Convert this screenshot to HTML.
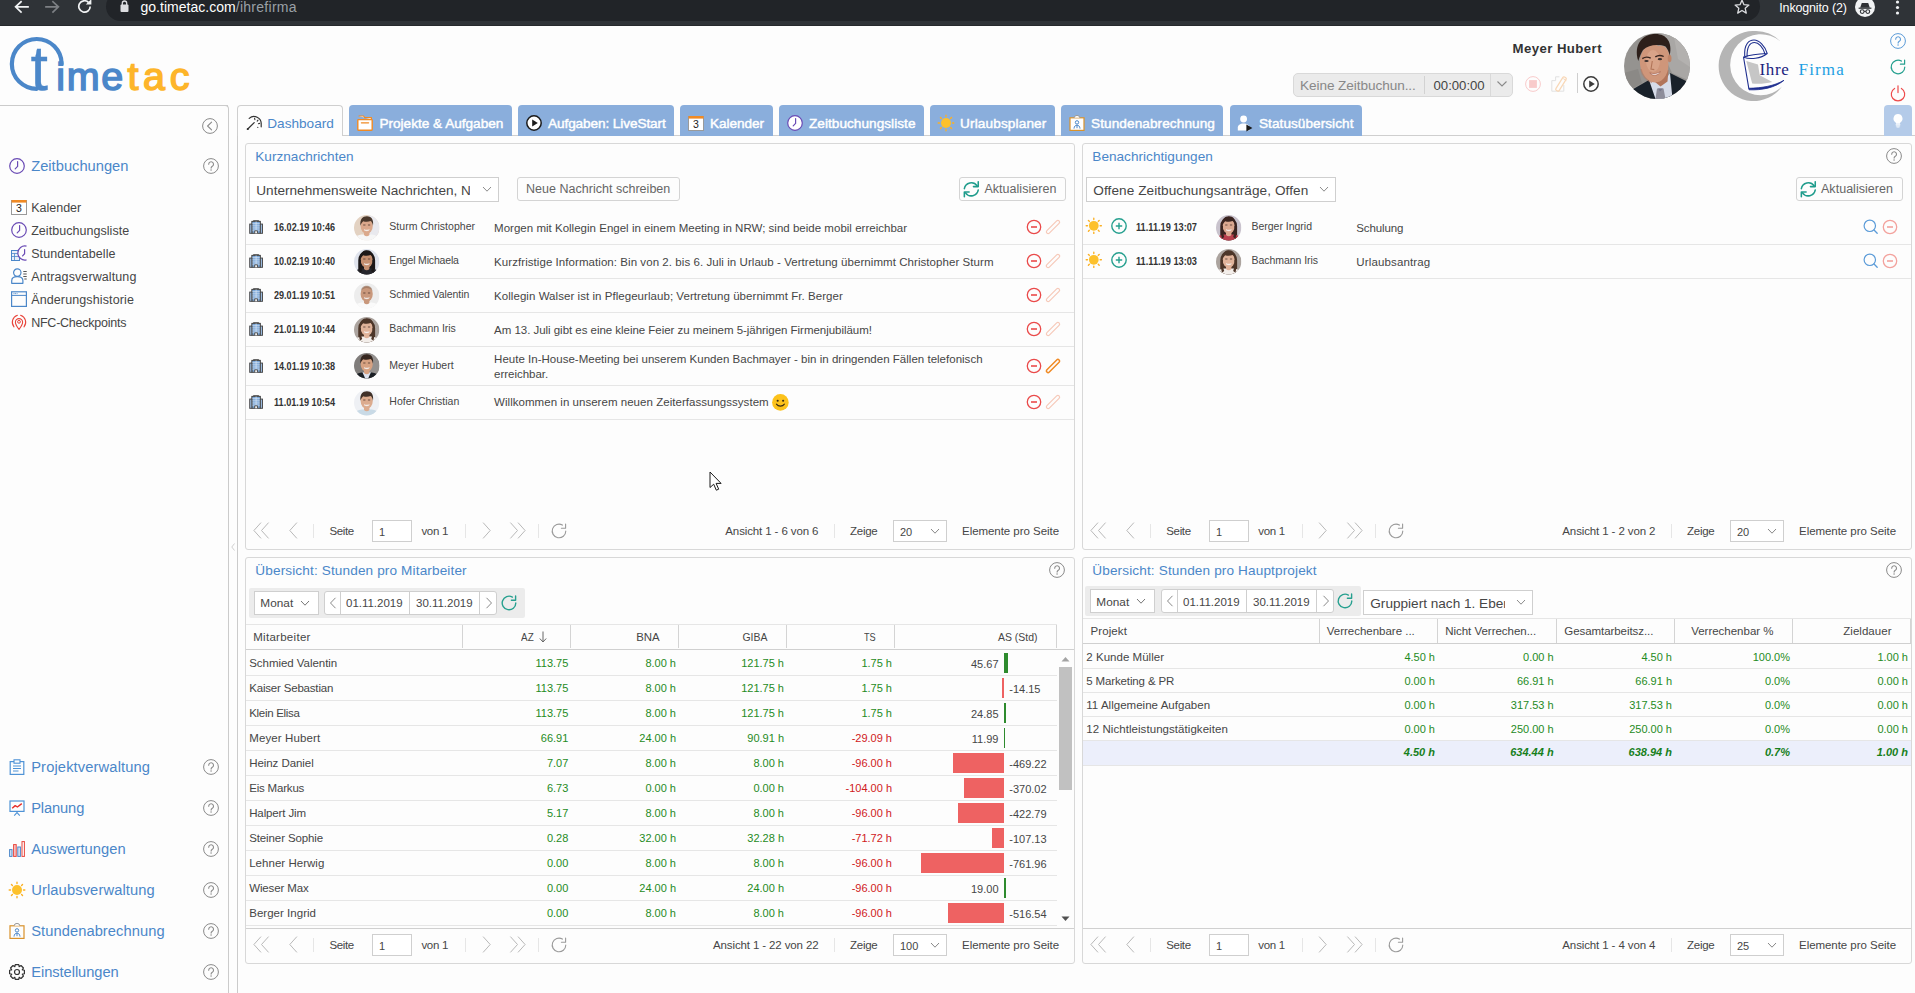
<!DOCTYPE html>
<html lang="de"><head><meta charset="utf-8"><title>TimeTac</title>
<style>
html,body{margin:0;padding:0}
body{width:1915px;height:993px;overflow:hidden;position:relative;background:#fdfdfd;font-family:'Liberation Sans',sans-serif;color:#464646}
.a{position:absolute;box-sizing:border-box;display:block}
.t{position:absolute;white-space:nowrap}
svg{overflow:visible}
</style></head><body>
<div class="a" style="left:0px;top:0px;width:1915px;height:26px;background:#2f3337;"></div>
<div class="a" style="left:0px;top:25px;width:1915px;height:1px;background:#26292c;"></div>
<div class="a" style="left:106px;top:-8px;width:1654px;height:29px;background:#212428;border-radius:14.5px;"></div>
<svg class="a" style="left:13px;top:0px;" width="16" height="16" viewBox="0 0 16 16"><path d="M15 6.800H3.400M8 1.800L2.600 6.800 8 12" fill="none" stroke="#f1f3f4" stroke-width="1.700" stroke-linecap="square" stroke-linejoin="miter"/></svg>
<svg class="a" style="left:45px;top:0px;" width="16" height="16" viewBox="0 0 16 16"><path d="M1 6.800H12.600M8 1.800L13.400 6.800 8 12" fill="none" stroke="#7d8084" stroke-width="1.700" stroke-linecap="square" stroke-linejoin="miter"/></svg>
<svg class="a" style="left:77px;top:-1px;" width="16" height="16" viewBox="0 0 16 16"><path d="M13.200 7.500A5.700 5.700 0 1 1 11.400 3.300" fill="none" stroke="#f1f3f4" stroke-width="1.700"/><path d="M14.400 0v5.600H8.800z" fill="#f1f3f4"/></svg>
<svg class="a" style="left:120px;top:0px;" width="10" height="13" viewBox="0 0 10 13"><rect x=".5" y="4.500" width="8" height="7.500" rx="1" fill="#dcdde0"/><path d="M2.300 5V3.200a2.200 2.200 0 0 1 4.400 0V5" fill="none" stroke="#dcdde0" stroke-width="1.300"/></svg>
<div class="t" style="top:-2.00px;font-size:14px;line-height:18px;color:#ffffff;left:140.50px;letter-spacing:0.026px;">go.timetac.com</div>
<div class="t" style="top:-2.00px;font-size:14px;line-height:18px;color:#9aa0a6;left:235.80px;letter-spacing:0.264px;">/ihrefirma</div>
<svg class="a" style="left:1734px;top:-1px;" width="16" height="16" viewBox="0 0 16 16"><path d="M8 1.200l2 4.500 4.900.4-3.700 3.200 1.100 4.800L8 11.500l-4.300 2.600 1.100-4.800L1.100 6.100l4.900-.4z" fill="none" stroke="#dcdde0" stroke-width="1.300" stroke-linejoin="round"/></svg>
<div class="t" style="top:0.00px;font-size:12.5px;line-height:16px;color:#ffffff;left:1779.30px;letter-spacing:-0.160px;">Inkognito (2)</div>
<svg class="a" style="left:1855px;top:-3px;" width="20" height="20" viewBox="0 0 20 20"><circle cx="10" cy="10" r="10" fill="#f1f3f4"/><path d="M5.200 10.800h9.600l-1.600-4.800h-6.400z" fill="#2f3236"/><path d="M3.600 11.200h12.800" stroke="#2f3236" stroke-width="1.200"/><circle cx="7.200" cy="14.600" r="1.900" fill="none" stroke="#2f3236" stroke-width="1.100"/><circle cx="12.800" cy="14.600" r="1.900" fill="none" stroke="#2f3236" stroke-width="1.100"/><path d="M9.100 14.400h1.800" stroke="#2f3236" stroke-width="1"/></svg>
<svg class="a" style="left:1895px;top:0px;" width="5" height="16" viewBox="0 0 5 16"><circle cx="2.500" cy="2" r="1.600" fill="#f1f3f4"/><circle cx="2.500" cy="7.500" r="1.600" fill="#f1f3f4"/><circle cx="2.500" cy="13" r="1.600" fill="#f1f3f4"/></svg>
<svg class="a" style="left:8px;top:34px;" width="190" height="62" viewBox="0 0 190 62"><path d="M28.750 54.800A24.900 24.900 0 1 1 53.650 29.900" fill="none" stroke="#4b87c9" stroke-width="4.200" stroke-linecap="round"/></svg>
<div class="t" style="top:27.00px;font-size:63px;line-height:82px;color:#4b87c9;left:30.50px;-webkit-text-stroke:.3px currentColor;">t</div>
<div class="t" style="top:50.50px;font-size:39.5px;line-height:51px;color:#4b87c9;left:56.30px;letter-spacing:1.615px;-webkit-text-stroke:1.500px currentColor;">ime</div>
<div class="t" style="top:50.50px;font-size:39.5px;line-height:51px;color:#fdb52a;left:127.50px;letter-spacing:4.599px;-webkit-text-stroke:1.500px currentColor;">tac</div>
<div class="t" style="top:40.00px;font-size:13.2px;line-height:17px;color:#333333;left:1512.50px;font-weight:700;letter-spacing:0.435px;">Meyer Hubert</div>
<div class="a" style="left:1293px;top:73px;width:220px;height:24px;background:#ebebeb;border:1px solid #d9d9d9;border-radius:5px;"></div>
<div class="a" style="left:1424px;top:76px;width:1px;height:18px;background:#d2d2d2;"></div>
<div class="a" style="left:1490px;top:74px;width:1px;height:22px;background:#d9d9d9;"></div>
<div class="t" style="top:76.50px;font-size:13.6px;line-height:18px;color:#888888;left:1300.00px;letter-spacing:-0.071px;">Keine Zeitbuchun...</div>
<div class="t" style="top:77.00px;font-size:13.2px;line-height:17px;color:#444444;left:1433.50px;letter-spacing:-0.018px;">00:00:00</div>
<svg class="a" style="left:1496px;top:80px;" width="12" height="8" viewBox="0 0 12 8"><path d="M1.500 1.500L6 6l4.500-4.500" fill="none" stroke="#8a8a8a" stroke-width="1.100"/></svg>
<svg class="a" style="left:1525px;top:75.5px;" width="16" height="16" viewBox="0 0 16 16"><g opacity=".28"><circle cx="8" cy="8" r="7.400" fill="none" stroke="#ee4b4b" stroke-width="1"/><rect x="4.100" y="4.100" width="7.800" height="7.800" fill="#ee4b4b"/></g></svg>
<svg class="a" style="left:1551px;top:75.5px;" width="16" height="16" viewBox="0 0 16 16"><g opacity=".32"><path d="M8.400 .8H4.600v3.800H.8v10.600h12V9" fill="none" stroke="#a8a8a8" stroke-width="1"/><rect x="-7.800" y="-1.900" width="15.600" height="3.800" rx="1.200" transform="translate(10 8) rotate(-58)" fill="none" stroke="#f08a24" stroke-width="1.200"/><path d="M12.300 2.600l3 1.900" stroke="#f08a24" stroke-width="1"/></g></svg>
<div class="a" style="left:1577px;top:73px;width:1px;height:20px;background:#cfcfcf;"></div>
<svg class="a" style="left:1582.5px;top:76px;" width="16" height="16" viewBox="0 0 16 16"><circle cx="8" cy="8" r="7.200" fill="#fdfdfd" stroke="#3a3a3a" stroke-width="1.500"/><path d="M6.200 4.400L11.800 8l-5.600 3.600z" fill="#3a3a3a"/></svg>
<svg class="a" style="left:1624px;top:33px;" width="66" height="66" viewBox="0 0 66 66"><clipPath id="fa"><circle cx="33" cy="33" r="33"/></clipPath><g clip-path="url(#fa)"><rect width="66" height="66" fill="#959390"/><path d="M30 0h36v48L48 40z" fill="#a9a7a5"/><path d="M50 4l16 8v22l-12-8z" fill="#b3b1af"/><path d="M0 40l14-4 4 14-18 10z" fill="#8b8986"/><path d="M4 59L25 47l8 14 13-21 18 9 2 17H0z" fill="#19212a"/><path d="M25 47l6.500 19H48.500L46 40l-8 11z" fill="#d6dbe8"/><path d="M33 55.500h6.500l2 10.500h-10z" fill="#8e8e9b"/><path d="M34 55.500l2 3 3-3z" fill="#76768a"/><path d="M27 40l17.500-3-1 11.500-7 5-8.500-7z" fill="#b1745a"/><ellipse cx="30.200" cy="30.500" rx="14.200" ry="19" transform="rotate(-7 30.200 30.500)" fill="#cf967a"/><ellipse cx="36.500" cy="22.500" rx="8.500" ry="10" fill="#cf967a"/><ellipse cx="29" cy="28" rx="7" ry="11" fill="#dba88e" opacity=".7"/><ellipse cx="45.600" cy="25.500" rx="1.900" ry="3.800" fill="#bf8468"/><path d="M14.300 28C9 11 19 1 31.500 1c11.500 0 17 8.500 14.300 21.500-1-4-2.500-7-4.300-9-7-2.500-17-2-22.500 3.500-2 3-3.500 7-4.700 11z" fill="#2d1f1a"/><path d="M18.300 25.600c2.500-1.700 5.800-1.800 8.400-.4M31.300 23.900c2.600-1.700 5.800-1.800 8.400-.4" stroke="#3a2620" stroke-width="1.400" fill="none"/><ellipse cx="22.500" cy="28" rx="2.200" ry="1.100" fill="#39302f"/><ellipse cx="35.900" cy="26.200" rx="2.200" ry="1.100" fill="#39302f"/><path d="M28.300 28l-1.300 8 3.300.6" stroke="#b17458" fill="none" stroke-width="1.100"/><path d="M25.800 39.800c3.300 1.500 7.700 1 10.600-1.300-1.600 4.200-8 5.300-10.600 1.300z" fill="#f3eded" stroke="#a55f4e" stroke-width=".6"/><path d="M17 36c1 6 5 11 11 13.500" stroke="#b67c62" stroke-width="1.500" fill="none" opacity=".6"/></g></svg>
<svg class="a" style="left:1716px;top:29px;" width="72" height="74" viewBox="0 0 72 74"><path d="M37 2A35 35 0 1 0 66 57.500A30.500 30.500 0 1 1 64.500 12.500A34.500 34.500 0 0 0 37 2z" fill="#b5b5b5"/><path d="M30.300 32l11.700 3.400 1.700 10.900 12.600 6.700c-6 1.600-13 2.200-20.100 1.600z" fill="#c6c6c6"/><path d="M28.700 27C28 15 33 11 38 11c5 0 11 6 13.200 13.500M31 27.500C31 17 34.500 13.500 38.500 13.500c4 0 8.500 4.500 10.500 11.500M27.500 28c6.500 3 17.500 1.500 23.700-3.500M27.500 28c7-2.400 16.500-3.200 23.700-3.500M27.500 28l5.300 31.300" fill="none" stroke="#1f2f8f" stroke-width="1.100" stroke-linecap="round"/><path d="M32.800 59.300c13.200-.3 25.200-2.300 35.200-8-9 7.500-22 10-35 9.500z" fill="#1f2f8f" stroke="#1f2f8f" stroke-width=".8" stroke-linejoin="round"/></svg>
<div class="t" style="top:58.50px;font-size:17px;line-height:22px;color:#1a237e;left:1759.50px;font-family:'Liberation Serif', serif;letter-spacing:0.656px;">Ihre</div>
<div class="t" style="top:58.50px;font-size:17px;line-height:22px;color:#1b9fe3;left:1798.50px;font-family:'Liberation Serif', serif;letter-spacing:1.178px;">Firma</div>
<svg class="a" style="left:1890px;top:33px;" width="16" height="16" viewBox="0 0 16 16"><circle cx="8" cy="8" r="7.4" fill="none" stroke="#5b9bd8" stroke-width="1"/><path d="M5.7 6.2a2.4 2.4 0 1 1 3.6 2.1c-.8.5-1.2.9-1.2 1.8" fill="none" stroke="#5b9bd8" stroke-width="1.1" stroke-linecap="round"/><circle cx="8.05" cy="12" r=".75" fill="#5b9bd8"/></svg>
<svg class="a" style="left:1889.5px;top:59px;" width="16" height="16" viewBox="0 0 16 16"><path d="M14.800 8A6.800 6.800 0 1 1 11.400 2.100" fill="none" stroke="#26a08f" stroke-width="1.2" stroke-linecap="round"/><path d="M14.600 1v4.200h-4.200" fill="none" stroke="#26a08f" stroke-width="1.2" stroke-linecap="round" stroke-linejoin="round"/></svg>
<svg class="a" style="left:1890px;top:84.8px;" width="16" height="16" viewBox="0 0 16 16"><path d="M4.600 3.400A6.700 6.700 0 1 0 11.400 3.400" fill="none" stroke="#ee4b4b" stroke-width="1.200" stroke-linecap="round"/><path d="M8 .8v6.800" stroke="#ee4b4b" stroke-width="1.200" stroke-linecap="round"/></svg>
<div class="a" style="left:0px;top:105px;width:228px;height:1px;background:#cbcbcb;"></div>
<div class="a" style="left:224px;top:105px;width:5px;height:5px;border:1px solid #cbcbcb;border-radius:0 4px 0 0;border-left:none;border-bottom:none;"></div>
<div class="a" style="left:228px;top:109px;width:1px;height:884px;background:#cbcbcb;"></div>
<svg class="a" style="left:201.5px;top:117.5px;" width="16" height="16" viewBox="0 0 16 16"><circle cx="8" cy="8" r="7.400" fill="none" stroke="#8a8a8a" stroke-width="1"/><path d="M9.600 4.200L5.600 8l4 3.800" fill="none" stroke="#8a8a8a" stroke-width="1.1" stroke-linecap="round" stroke-linejoin="round"/></svg>
<svg class="a" style="left:231px;top:543px;" width="4" height="8" viewBox="0 0 4 8"><path d="M3.500 .5L.8 4l2.700 3.500" fill="none" stroke="#d0d0d0" stroke-width="1"/></svg>
<svg class="a" style="left:9px;top:157.8px;" width="16" height="16" viewBox="0 0 16 16"><circle cx="8" cy="8" r="7.3" fill="none" stroke="#6a4bb5" stroke-width="1.2"/><path d="M8.6 3.6v4.8L6.2 10.8" fill="none" stroke="#6a4bb5" stroke-width="1.2" stroke-linecap="round" stroke-linejoin="round"/></svg>
<div class="t" style="top:156.50px;font-size:14.7px;line-height:19px;color:#4b87c9;left:31.20px;letter-spacing:0.009px;">Zeitbuchungen</div>
<svg class="a" style="left:202.8px;top:157.8px;" width="16" height="16" viewBox="0 0 16 16"><circle cx="8" cy="8" r="7.4" fill="none" stroke="#8a8a8a" stroke-width="1"/><path d="M5.7 6.2a2.4 2.4 0 1 1 3.6 2.1c-.8.5-1.2.9-1.2 1.8" fill="none" stroke="#8a8a8a" stroke-width="1.1" stroke-linecap="round"/><circle cx="8.05" cy="12" r=".75" fill="#8a8a8a"/></svg>
<svg class="a" style="left:10.8px;top:199.3px;" width="16" height="16" viewBox="0 0 16 16"><rect x=".5" y="1.5" width="15" height="14" fill="#fff" stroke="#9a9a9a" stroke-width="1"/><rect x=".5" y="1" width="15" height="2.6" fill="#f08a24"/><text x="8" y="13.4" font-size="10.5" text-anchor="middle" fill="#222" font-family="Liberation Sans, sans-serif">3</text></svg>
<div class="t" style="top:200.00px;font-size:12.5px;line-height:16px;color:#464646;left:31.20px;letter-spacing:-0.006px;">Kalender</div>
<svg class="a" style="left:10.8px;top:222.3px;" width="16" height="16" viewBox="0 0 16 16"><circle cx="8" cy="8" r="7.3" fill="none" stroke="#6a4bb5" stroke-width="1.2"/><path d="M8.6 3.6v4.8L6.2 10.8" fill="none" stroke="#6a4bb5" stroke-width="1.2" stroke-linecap="round" stroke-linejoin="round"/></svg>
<div class="t" style="top:223.00px;font-size:12.5px;line-height:16px;color:#464646;left:31.20px;letter-spacing:0.042px;">Zeitbuchungsliste</div>
<svg class="a" style="left:10.8px;top:245.3px;" width="16" height="16" viewBox="0 0 16 16"><rect x=".5" y="5.5" width="8" height="10" fill="#e8eef8" stroke="#4b87c9" stroke-width="1"/><path d="M.5 8.5h8M.5 11.5h8M3.5 8.5v7" stroke="#4b87c9" stroke-width=".8" fill="none"/><path d="M15.5 1.2a7 7 0 1 0 0 13.6" fill="#fdfdfd" stroke="#6a4bb5" stroke-width="1.2"/><path d="M13.6 4.5v4.2l-2 2.2" fill="none" stroke="#6a4bb5" stroke-width="1.2" stroke-linecap="round"/></svg>
<div class="t" style="top:246.00px;font-size:12.5px;line-height:16px;color:#464646;left:31.20px;letter-spacing:0.071px;">Stundentabelle</div>
<svg class="a" style="left:10.8px;top:268.3px;" width="16" height="16" viewBox="0 0 16 16"><circle cx="6.3" cy="4.6" r="3.7" fill="none" stroke="#4b87c9" stroke-width="1.2"/><path d="M.7 15.3v-2.6c0-2.4 2-4 5.6-4s5.6 1.6 5.6 4v2.6z" fill="none" stroke="#4b87c9" stroke-width="1.2" stroke-linejoin="round"/><path d="M12.3 3.5h3.4M12.3 6h3.4M12.3 8.5h3.4M13.3 11h2.4" stroke="#555" stroke-width="1.1"/></svg>
<div class="t" style="top:269.00px;font-size:12.5px;line-height:16px;color:#464646;left:31.20px;letter-spacing:0.104px;">Antragsverwaltung</div>
<svg class="a" style="left:10.8px;top:291.3px;" width="16" height="16" viewBox="0 0 16 16"><rect x=".6" y=".8" width="14.800" height="14.600" fill="none" stroke="#4b87c9" stroke-width="1.200"/><path d="M.6 4.400h14.800" stroke="#4b87c9" stroke-width="1"/><path d="M2.500 2.600h4" stroke="#4b87c9" stroke-width=".9" stroke-dasharray="1 .6"/></svg>
<div class="t" style="top:292.00px;font-size:12.5px;line-height:16px;color:#464646;left:31.20px;letter-spacing:0.120px;">Änderungshistorie</div>
<svg class="a" style="left:10.8px;top:314.3px;" width="16" height="16" viewBox="0 0 16 16"><path d="M8 15.400C5.600 12.200 4.400 10 4.400 8.200a3.600 3.600 0 0 1 7.200 0c0 1.800-1.200 4-3.600 7.200z" fill="none" stroke="#e8453c" stroke-width="1.100" stroke-linejoin="round"/><circle cx="8" cy="7.800" r="1.400" fill="none" stroke="#e8453c" stroke-width="1"/><path d="M6.400 1.300A7.200 7.200 0 0 0 3 12.800M9.600 1.300A7.200 7.200 0 0 1 13 12.800" fill="none" stroke="#e8453c" stroke-width="1.100" stroke-linecap="round"/></svg>
<div class="t" style="top:315.00px;font-size:12.5px;line-height:16px;color:#464646;left:31.20px;letter-spacing:-0.243px;">NFC-Checkpoints</div>
<svg class="a" style="left:9px;top:759px;" width="16" height="16" viewBox="0 0 16 16"><rect x="1.2" y="2.6" width="13.6" height="12.8" fill="none" stroke="#4f93d6" stroke-width="1.2"/><rect x="5" y=".8" width="6" height="3.4" fill="#fdfdfd" stroke="#4f93d6" stroke-width="1.1"/><path d="M4 7h8M4 9.500h8M4 12h5.500" stroke="#4f93d6" stroke-width="1"/></svg>
<div class="t" style="top:757.50px;font-size:14.7px;line-height:19px;color:#4b87c9;left:31.20px;letter-spacing:0.132px;">Projektverwaltung</div>
<svg class="a" style="left:203px;top:759px;" width="16" height="16" viewBox="0 0 16 16"><circle cx="8" cy="8" r="7.4" fill="none" stroke="#8a8a8a" stroke-width="1"/><path d="M5.7 6.2a2.4 2.4 0 1 1 3.6 2.1c-.8.5-1.2.9-1.2 1.8" fill="none" stroke="#8a8a8a" stroke-width="1.1" stroke-linecap="round"/><circle cx="8.05" cy="12" r=".75" fill="#8a8a8a"/></svg>
<svg class="a" style="left:9px;top:800px;" width="16" height="16" viewBox="0 0 16 16"><rect x="1" y="1" width="14" height="10.400" fill="none" stroke="#4f93d6" stroke-width="1.2"/><path d="M8 11.400v1.600M5.200 15.600L8 12.600l2.800 3" fill="none" stroke="#4f93d6" stroke-width="1.1"/><path d="M3.200 8.200l3-2.600 2.200 1.400L12.800 3.600" fill="none" stroke="#e8302a" stroke-width="1.4" stroke-linejoin="round"/></svg>
<div class="t" style="top:798.50px;font-size:14.7px;line-height:19px;color:#4b87c9;left:31.20px;letter-spacing:-0.129px;">Planung</div>
<svg class="a" style="left:203px;top:800px;" width="16" height="16" viewBox="0 0 16 16"><circle cx="8" cy="8" r="7.4" fill="none" stroke="#8a8a8a" stroke-width="1"/><path d="M5.7 6.2a2.4 2.4 0 1 1 3.6 2.1c-.8.5-1.2.9-1.2 1.8" fill="none" stroke="#8a8a8a" stroke-width="1.1" stroke-linecap="round"/><circle cx="8.05" cy="12" r=".75" fill="#8a8a8a"/></svg>
<svg class="a" style="left:9px;top:841px;" width="16" height="16" viewBox="0 0 16 16"><rect x=".6" y="8.600" width="2.400" height="6.800" fill="#dbe7f6" stroke="#4b87c9" stroke-width="1"/><rect x="4.600" y="3.600" width="2.600" height="11.800" fill="#f7caca" stroke="#e8453c" stroke-width="1"/><rect x="8.800" y="6" width="2.600" height="9.400" fill="#dbe7f6" stroke="#4b87c9" stroke-width="1"/><rect x="13" y=".6" width="2.400" height="14.800" fill="#fdfdfd" stroke="#e8453c" stroke-width="1"/></svg>
<div class="t" style="top:839.50px;font-size:14.7px;line-height:19px;color:#4b87c9;left:31.20px;letter-spacing:0.049px;">Auswertungen</div>
<svg class="a" style="left:203px;top:841px;" width="16" height="16" viewBox="0 0 16 16"><circle cx="8" cy="8" r="7.4" fill="none" stroke="#8a8a8a" stroke-width="1"/><path d="M5.7 6.2a2.4 2.4 0 1 1 3.6 2.1c-.8.5-1.2.9-1.2 1.8" fill="none" stroke="#8a8a8a" stroke-width="1.1" stroke-linecap="round"/><circle cx="8.05" cy="12" r=".75" fill="#8a8a8a"/></svg>
<svg class="a" style="left:9px;top:882px;" width="16" height="16" viewBox="0 0 16 16"><circle cx="8" cy="8" r="5" fill="#fdc12c"/><path d="M14.50 8.00L15.80 8.00M12.60 12.60L13.52 13.52M8.00 14.50L8.00 15.80M3.40 12.60L2.48 13.52M1.50 8.00L0.20 8.00M3.40 3.40L2.48 2.48M8.00 1.50L8.00 0.20M12.60 3.40L13.52 2.48" stroke="#fbb024" stroke-width="1.400" stroke-linecap="round"/></svg>
<div class="t" style="top:880.50px;font-size:14.7px;line-height:19px;color:#4b87c9;left:31.20px;letter-spacing:0.121px;">Urlaubsverwaltung</div>
<svg class="a" style="left:203px;top:882px;" width="16" height="16" viewBox="0 0 16 16"><circle cx="8" cy="8" r="7.4" fill="none" stroke="#8a8a8a" stroke-width="1"/><path d="M5.7 6.2a2.4 2.4 0 1 1 3.6 2.1c-.8.5-1.2.9-1.2 1.8" fill="none" stroke="#8a8a8a" stroke-width="1.1" stroke-linecap="round"/><circle cx="8.05" cy="12" r=".75" fill="#8a8a8a"/></svg>
<svg class="a" style="left:9px;top:923px;" width="16" height="16" viewBox="0 0 16 16"><rect x="1" y="2.800" width="14" height="12.600" fill="none" stroke="#d9922b" stroke-width="1.2"/><path d="M5.200 2.800a2.800 2.400 0 0 1 5.600 0" fill="#fdfdfd" stroke="#9a9a9a" stroke-width="1"/><circle cx="8" cy="7.400" r="1.700" fill="none" stroke="#4b87c9" stroke-width="1"/><path d="M5 13.600c.2-2.200 1.200-3.400 3-3.400s2.800 1.200 3 3.400M8 10.200v3" fill="none" stroke="#4b87c9" stroke-width="1"/></svg>
<div class="t" style="top:921.50px;font-size:14.7px;line-height:19px;color:#4b87c9;left:31.20px;letter-spacing:0.070px;">Stundenabrechnung</div>
<svg class="a" style="left:203px;top:923px;" width="16" height="16" viewBox="0 0 16 16"><circle cx="8" cy="8" r="7.4" fill="none" stroke="#8a8a8a" stroke-width="1"/><path d="M5.7 6.2a2.4 2.4 0 1 1 3.6 2.1c-.8.5-1.2.9-1.2 1.8" fill="none" stroke="#8a8a8a" stroke-width="1.1" stroke-linecap="round"/><circle cx="8.05" cy="12" r=".75" fill="#8a8a8a"/></svg>
<svg class="a" style="left:9px;top:964px;" width="16" height="16" viewBox="0 0 16 16"><path d="M15.40 6.27L15.40 9.73L13.25 10.22L13.28 10.14L14.46 12.01L12.01 14.46L10.14 13.28L10.22 13.25L9.73 15.40L6.27 15.40L5.78 13.25L5.86 13.28L3.99 14.46L1.54 12.01L2.72 10.14L2.75 10.22L0.60 9.73L0.60 6.27L2.75 5.78L2.72 5.86L1.54 3.99L3.99 1.54L5.86 2.72L5.78 2.75L6.27 0.60L9.73 0.60L10.22 2.75L10.14 2.72L12.01 1.54L14.46 3.99L13.28 5.86L13.25 5.78z" fill="none" stroke="#333" stroke-width="1.2" stroke-linejoin="round"/><circle cx="8" cy="8" r="2.500" fill="none" stroke="#333" stroke-width="1.2"/></svg>
<div class="t" style="top:962.50px;font-size:14.7px;line-height:19px;color:#4b87c9;left:31.20px;letter-spacing:-0.054px;">Einstellungen</div>
<svg class="a" style="left:203px;top:964px;" width="16" height="16" viewBox="0 0 16 16"><circle cx="8" cy="8" r="7.4" fill="none" stroke="#8a8a8a" stroke-width="1"/><path d="M5.7 6.2a2.4 2.4 0 1 1 3.6 2.1c-.8.5-1.2.9-1.2 1.8" fill="none" stroke="#8a8a8a" stroke-width="1.1" stroke-linecap="round"/><circle cx="8.05" cy="12" r=".75" fill="#8a8a8a"/></svg>
<div class="a" style="left:237px;top:135px;width:1678px;height:1px;background:#cfcfcf;"></div>
<div class="a" style="left:237px;top:135px;width:1px;height:858px;background:#cbcbcb;"></div>
<div class="a" style="left:237px;top:105px;width:106px;height:31px;background:#fdfdfd;border:1px solid #cfcfcf;border-radius:4px 4px 0 0;border-bottom:none;"></div>
<svg class="a" style="left:245.5px;top:115px;" width="16" height="16" viewBox="0 0 16 16"><path d="M3.200 3.400A7.200 7.200 0 0 1 15.200 9.200v2.600" fill="none" stroke="#333" stroke-width="1.2" stroke-linecap="round"/><path d="M1.500 14.200L8.200 7.600" stroke="#333" stroke-width="1.3" stroke-linecap="round"/><circle cx="1.800" cy="14" r="1.100" fill="#333"/><path d="M8.600 3.400l.3 1.200M12 5.200l-.8.9M13.600 8.400l-1.200.3M11.800 12.400h.01" stroke="#333" stroke-width="1.100" stroke-linecap="round"/></svg>
<div class="t" style="top:114.50px;font-size:13.6px;line-height:18px;color:#4b87c9;left:267.30px;letter-spacing:-0.002px;">Dashboard</div>
<div class="a" style="left:349.3px;top:105px;width:162.5px;height:31px;background:#8aaedc;border-radius:4px 4px 0 0;"></div>
<svg class="a" style="left:356.8px;top:115px;" width="16" height="16" viewBox="0 0 16 16"><path d="M1.600 1h5l1 1.600H14.400v2" fill="#fff" stroke="#f08a24" stroke-width="1.200" stroke-linejoin="round"/><rect x=".8" y="4.600" width="14.400" height="10.600" rx=".6" fill="#fff" stroke="#f08a24" stroke-width="1.400"/><path d="M4.400 7.800h7.200" stroke="#f08a24" stroke-width="1.300" stroke-linecap="round"/></svg>
<div class="t" style="top:114.50px;font-size:13.6px;line-height:18px;color:#ffffff;left:379.40px;letter-spacing:0.002px;-webkit-text-stroke:.45px #fff;">Projekte &amp; Aufgaben</div>
<div class="a" style="left:518px;top:105px;width:155.79999999999995px;height:31px;background:#8aaedc;border-radius:4px 4px 0 0;"></div>
<svg class="a" style="left:525.5px;top:115px;" width="16" height="16" viewBox="0 0 16 16"><circle cx="8" cy="8" r="7.200" fill="#fff" stroke="#1a1a1a" stroke-width="1.500"/><path d="M6.200 4.400L11.800 8l-5.600 3.600z" fill="#1a1a1a"/></svg>
<div class="t" style="top:114.50px;font-size:13.6px;line-height:18px;color:#ffffff;left:548.00px;letter-spacing:-0.090px;-webkit-text-stroke:.45px #fff;">Aufgaben: LiveStart</div>
<div class="a" style="left:680px;top:105px;width:92.79999999999995px;height:31px;background:#8aaedc;border-radius:4px 4px 0 0;"></div>
<svg class="a" style="left:687.5px;top:115px;" width="16" height="16" viewBox="0 0 16 16"><rect x=".5" y="1.5" width="15" height="14" fill="#fff" stroke="#9a9a9a" stroke-width="1"/><rect x=".5" y="1" width="15" height="2.6" fill="#f08a24"/><text x="8" y="13.4" font-size="10.5" text-anchor="middle" fill="#222" font-family="Liberation Sans, sans-serif">3</text></svg>
<div class="t" style="top:114.50px;font-size:13.6px;line-height:18px;color:#ffffff;left:710.00px;letter-spacing:-0.053px;-webkit-text-stroke:.45px #fff;">Kalender</div>
<div class="a" style="left:779.2px;top:105px;width:144.79999999999995px;height:31px;background:#8aaedc;border-radius:4px 4px 0 0;"></div>
<svg class="a" style="left:786.7px;top:115px;" width="16" height="16" viewBox="0 0 16 16"><circle cx="8" cy="8" r="7.3" fill="#fff" stroke="#6a4bb5" stroke-width="1.2"/><path d="M8.6 3.6v4.8L6.2 10.8" fill="none" stroke="#6a4bb5" stroke-width="1.2" stroke-linecap="round" stroke-linejoin="round"/></svg>
<div class="t" style="top:114.50px;font-size:13.6px;line-height:18px;color:#ffffff;left:809.00px;letter-spacing:0.041px;-webkit-text-stroke:.45px #fff;">Zeitbuchungsliste</div>
<div class="a" style="left:930.3px;top:105px;width:124.70000000000005px;height:31px;background:#8aaedc;border-radius:4px 4px 0 0;"></div>
<svg class="a" style="left:937.8px;top:115px;" width="16" height="16" viewBox="0 0 16 16"><circle cx="8" cy="8" r="5" fill="#fdc12c"/><path d="M14.50 8.00L15.80 8.00M12.60 12.60L13.52 13.52M8.00 14.50L8.00 15.80M3.40 12.60L2.48 13.52M1.50 8.00L0.20 8.00M3.40 3.40L2.48 2.48M8.00 1.50L8.00 0.20M12.60 3.40L13.52 2.48" stroke="#fbb024" stroke-width="1.400" stroke-linecap="round"/></svg>
<div class="t" style="top:114.50px;font-size:13.6px;line-height:18px;color:#ffffff;left:960.00px;letter-spacing:0.143px;-webkit-text-stroke:.45px #fff;">Urlaubsplaner</div>
<div class="a" style="left:1061.4px;top:105px;width:161.89999999999986px;height:31px;background:#8aaedc;border-radius:4px 4px 0 0;"></div>
<svg class="a" style="left:1068.9px;top:115px;" width="16" height="16" viewBox="0 0 16 16"><rect x="1" y="2.800" width="14" height="12.600" fill="#fff" stroke="#d9922b" stroke-width="1.2"/><path d="M5.200 2.800a2.800 2.400 0 0 1 5.600 0" fill="#fdfdfd" stroke="#9a9a9a" stroke-width="1"/><circle cx="8" cy="7.400" r="1.700" fill="none" stroke="#4b87c9" stroke-width="1"/><path d="M5 13.600c.2-2.200 1.200-3.400 3-3.400s2.800 1.200 3 3.400M8 10.200v3" fill="none" stroke="#4b87c9" stroke-width="1"/></svg>
<div class="t" style="top:114.50px;font-size:13.6px;line-height:18px;color:#ffffff;left:1091.00px;letter-spacing:0.091px;-webkit-text-stroke:.45px #fff;">Stundenabrechnung</div>
<div class="a" style="left:1229.6px;top:105px;width:132.10000000000014px;height:31px;background:#8aaedc;border-radius:4px 4px 0 0;"></div>
<svg class="a" style="left:1237.1px;top:115px;" width="16" height="16" viewBox="0 0 16 16"><circle cx="6.600" cy="4" r="3.400" fill="#fff"/><path d="M.8 15.600v-3c0-2.600 2.200-4.200 5.800-4.200s5.800 1.600 5.800 4.200v3z" fill="#fff"/><path d="M9.400 9.400L15.400 13l-6 3.400z" fill="#1a1a1a"/></svg>
<div class="t" style="top:114.50px;font-size:13.6px;line-height:18px;color:#ffffff;left:1259.00px;letter-spacing:0.053px;-webkit-text-stroke:.45px #fff;">Statusübersicht</div>
<div class="a" style="left:1884px;top:105px;width:28px;height:31px;background:#b4cbe9;border-radius:4px 4px 0 0;"></div>
<svg class="a" style="left:1890.5px;top:111.5px;" width="14" height="17" viewBox="0 0 16 16.500"><path d="M8 .8a5.200 5.200 0 0 0-3 9.400c.5.400.8 1 .8 1.800h4.400c0-.8.3-1.400.8-1.800A5.200 5.200 0 0 0 8 .8z" fill="#fff"/><path d="M5.800 13h4.400M6 14.400h4M6.800 15.700h2.400" stroke="#fff" stroke-width="1" stroke-linecap="round"/></svg>
<div class="a" style="left:245px;top:143px;width:830px;height:407px;background:#fdfdfd;border:1px solid #d8d8d8;border-radius:3px;"></div>
<div class="t" style="top:147.50px;font-size:13.6px;line-height:18px;color:#4b87c9;left:255.30px;letter-spacing:0.004px;">Kurznachrichten</div>
<div class="a" style="left:249px;top:177px;width:250px;height:25px;background:#fff;border:1px solid #cfcfcf;"></div>
<div class="a" style="left:256px;top:178px;width:214px;height:23px;overflow:hidden">
<div class="t" style="top:3.50px;font-size:13.6px;line-height:18px;color:#464646;left:0.30px;">Unternehmensweite Nachrichten, Nachrichten an mich</div>
</div>
<svg class="a" style="left:481.5px;top:186.2px;" width="10" height="7" viewBox="0 0 10 7"><path d="M1 1l4 4.200L9 1" fill="none" stroke="#8c8c8c" stroke-width="1"/></svg>
<div class="a" style="left:517px;top:177px;width:163px;height:24px;background:#fdfdfd;border:1px solid #d4d4d4;border-radius:3px;"></div>
<div class="t" style="top:181.00px;font-size:12.5px;line-height:16px;color:#666666;left:526.00px;letter-spacing:0.020px;">Neue Nachricht schreiben</div>
<div class="a" style="left:959px;top:177px;width:107px;height:24px;background:#fdfdfd;border:1px solid #d4d4d4;border-radius:3px;"></div>
<svg class="a" style="left:962.7px;top:180.5px;" width="16.6" height="16.6" viewBox="0 0 16 16"><path d="M1.300 7.400A6.800 6.800 0 0 1 13.600 4.600M14.700 8.600A6.800 6.800 0 0 1 2.400 11.400" fill="none" stroke="#1f9c8c" stroke-width="1.500" stroke-linecap="round"/><path d="M14.700 .8v4.600H10.100M1.300 15.200v-4.600h4.600" fill="none" stroke="#1f9c8c" stroke-width="1.500" stroke-linecap="round" stroke-linejoin="round"/></svg>
<div class="t" style="top:181.00px;font-size:12.5px;line-height:16px;color:#666666;left:984.40px;letter-spacing:0.032px;">Aktualisieren</div>
<svg class="a" style="left:249px;top:220.0px;" width="14.2" height="14.2" viewBox="0 0 16 16"><path d="M4.200 1.600L5 .6h6l.8 1" fill="none" stroke="#555" stroke-width="1"/><rect x="3.200" y="1.600" width="9.600" height="13.400" fill="#7aa7d9" stroke="#4a4a4a" stroke-width="1.200"/><rect x=".8" y="4.600" width="2.400" height="10.400" fill="#9bbbe0" stroke="#4a4a4a" stroke-width="1.100"/><rect x="12.800" y="4.600" width="2.400" height="10.400" fill="#9bbbe0" stroke="#4a4a4a" stroke-width="1.100"/><path d="M3.800 4.200h8.400M3.800 6.600h8.400M3.800 9h8.400M3.800 11.400h8.400M8 1.600v10" stroke="#dfe9f6" stroke-width=".8"/><path d="M6.400 15v-2.800h3.200V15" fill="#eee" stroke="#4a4a4a" stroke-width="1"/></svg>
<div class="t" style="top:221.00px;font-size:10px;line-height:13px;color:#333333;left:274.30px;font-weight:700;transform:scaleX(0.9066);transform-origin:left center;">16.02.19 10:46</div>
<svg class="a" style="left:353.8px;top:214.60000000000002px;" width="25.4" height="25.4" viewBox="0 0 26 26"><clipPath id="fk0"><circle cx="13" cy="13" r="13"/></clipPath><g clip-path="url(#fk0)"><rect width="26" height="26" fill="#e3d2c2"/><rect x="15" width="11" height="26" fill="#e9e9ee"/><g transform="translate(13 15) scale(1.15) translate(-13 -14.500)"><path d="M0 27c0-5 3.500-7.400 8.500-8.200h9c5 .8 8.500 3.200 8.500 8.200z" fill="#f6f6f6"/><path d="M10.600 15h4.800v4.200c-1.400 1.600-3.400 1.600-4.800 0z" fill="#dba98c"/><ellipse cx="13" cy="11.200" rx="5.400" ry="6.900" fill="#dba98c"/><path d="M7.400 11C6.800 5.200 9.400 2.600 13.200 2.600s6.200 2.800 5.400 8.400c-.5-2.400-1.300-3.600-2.200-4.100-2 .9-4.800.8-6.400.2-1 .8-2 2-2.600 3.900z" fill="#4a382c"/><path d="M9.900 10.400h2M14.100 10.400h2" stroke="#4a3328" stroke-width=".9" opacity=".75"/><path d="M10.600 14.600c1.400 1.200 3.400 1.200 4.800 0-1 .35-3.800.35-4.800 0z" fill="#fff" stroke="#f4f0ee" stroke-width=".5"/></g></g></svg>
<div class="t" style="top:219.00px;font-size:10.5px;line-height:14px;color:#464646;left:389.30px;letter-spacing:0.035px;">Sturm Christopher</div>
<div class="t" style="top:220.50px;font-size:11.5px;line-height:15px;color:#464646;left:494.10px;letter-spacing:0.014px;">Morgen mit Kollegin Engel in einem Meeting in NRW; sind beide mobil erreichbar</div>
<svg class="a" style="left:1026px;top:219.3px;" width="16" height="16" viewBox="0 0 16 16"><g opacity="1"><circle cx="8" cy="8" r="6.700" fill="none" stroke="#ea4a4a" stroke-width="1.300"/><path d="M5 8h6" stroke="#ea4a4a" stroke-width="1.600"/></g></svg>
<svg class="a" style="left:1045px;top:219.3px;" width="16" height="16" viewBox="0 0 16 16"><g opacity="1"><rect x="-8.600" y="-1.700" width="17.200" height="3.400" rx="1.700" transform="translate(8 8) rotate(-45)" fill="none" stroke="#f6c9b9" stroke-width="1.2"/></g></svg>
<div class="a" style="left:246px;top:244px;width:828px;height:1px;background:#e6e6e6;"></div>
<svg class="a" style="left:249px;top:254.09999999999997px;" width="14.2" height="14.2" viewBox="0 0 16 16"><path d="M4.200 1.600L5 .6h6l.8 1" fill="none" stroke="#555" stroke-width="1"/><rect x="3.200" y="1.600" width="9.600" height="13.400" fill="#7aa7d9" stroke="#4a4a4a" stroke-width="1.200"/><rect x=".8" y="4.600" width="2.400" height="10.400" fill="#9bbbe0" stroke="#4a4a4a" stroke-width="1.100"/><rect x="12.800" y="4.600" width="2.400" height="10.400" fill="#9bbbe0" stroke="#4a4a4a" stroke-width="1.100"/><path d="M3.800 4.200h8.400M3.800 6.600h8.400M3.800 9h8.400M3.800 11.400h8.400M8 1.600v10" stroke="#dfe9f6" stroke-width=".8"/><path d="M6.400 15v-2.800h3.200V15" fill="#eee" stroke="#4a4a4a" stroke-width="1"/></svg>
<div class="t" style="top:255.00px;font-size:10px;line-height:13px;color:#333333;left:274.30px;font-weight:700;transform:scaleX(0.9066);transform-origin:left center;">10.02.19 10:40</div>
<svg class="a" style="left:353.8px;top:248.7px;" width="25.4" height="25.4" viewBox="0 0 26 26"><clipPath id="fk1"><circle cx="13" cy="13" r="13"/></clipPath><g clip-path="url(#fk1)"><rect width="26" height="26" fill="#dfe3ec"/><g transform="translate(13 15) scale(1.15) translate(-13 -14.500)"><path d="M5.500 25V11.500a7.500 8.500 0 0 1 15 0V25z" fill="#1c1818"/><path d="M0 27c0-5 3.500-7.400 8.500-8.200h9c5 .8 8.500 3.200 8.500 8.200z" fill="#26262c"/><path d="M10.600 15h4.800v4.200c-1.400 1.600-3.400 1.600-4.800 0z" fill="#c48f70"/><ellipse cx="13" cy="11.200" rx="5.400" ry="6.900" fill="#c48f70"/><path d="M7.400 11C6.800 5.200 9.400 2.600 13.200 2.600s6.200 2.800 5.400 8.400c-.5-2.400-1.300-3.600-2.200-4.100-2 .9-4.800.8-6.400.2-1 .8-2 2-2.600 3.900z" fill="#1c1818"/><path d="M9.900 10.400h2M14.100 10.400h2" stroke="#4a3328" stroke-width=".9" opacity=".75"/><path d="M10.600 14.600c1.400 1.200 3.400 1.200 4.800 0-1 .35-3.800.35-4.800 0z" fill="#fff" stroke="#f4f0ee" stroke-width=".5"/><path d="M6.400 11c-.6 4-.4 8 .6 11.500l2-1.500c-1.200-3-1.400-6.500-1-10zM19.600 11c.6 4 .4 8-.6 11.500l-2-1.500c1.200-3 1.400-6.500 1-10z" fill="#1c1818"/></g></g></svg>
<div class="t" style="top:253.00px;font-size:10.5px;line-height:14px;color:#464646;left:389.30px;letter-spacing:-0.164px;">Engel Michaela</div>
<div class="t" style="top:254.50px;font-size:11.5px;line-height:15px;color:#464646;left:494.10px;letter-spacing:0.061px;">Kurzfristige Information: Bin von 2. bis 6. Juli in Urlaub - Vertretung übernimmt Christopher Sturm</div>
<svg class="a" style="left:1026px;top:253.39999999999998px;" width="16" height="16" viewBox="0 0 16 16"><g opacity="1"><circle cx="8" cy="8" r="6.700" fill="none" stroke="#ea4a4a" stroke-width="1.300"/><path d="M5 8h6" stroke="#ea4a4a" stroke-width="1.600"/></g></svg>
<svg class="a" style="left:1045px;top:253.39999999999998px;" width="16" height="16" viewBox="0 0 16 16"><g opacity="1"><rect x="-8.600" y="-1.700" width="17.200" height="3.400" rx="1.700" transform="translate(8 8) rotate(-45)" fill="none" stroke="#f6c9b9" stroke-width="1.2"/></g></svg>
<div class="a" style="left:246px;top:278px;width:828px;height:1px;background:#e6e6e6;"></div>
<svg class="a" style="left:249px;top:288.09999999999997px;" width="14.2" height="14.2" viewBox="0 0 16 16"><path d="M4.200 1.600L5 .6h6l.8 1" fill="none" stroke="#555" stroke-width="1"/><rect x="3.200" y="1.600" width="9.600" height="13.400" fill="#7aa7d9" stroke="#4a4a4a" stroke-width="1.200"/><rect x=".8" y="4.600" width="2.400" height="10.400" fill="#9bbbe0" stroke="#4a4a4a" stroke-width="1.100"/><rect x="12.800" y="4.600" width="2.400" height="10.400" fill="#9bbbe0" stroke="#4a4a4a" stroke-width="1.100"/><path d="M3.800 4.200h8.400M3.800 6.600h8.400M3.800 9h8.400M3.800 11.400h8.400M8 1.600v10" stroke="#dfe9f6" stroke-width=".8"/><path d="M6.400 15v-2.800h3.200V15" fill="#eee" stroke="#4a4a4a" stroke-width="1"/></svg>
<div class="t" style="top:289.00px;font-size:10px;line-height:13px;color:#333333;left:274.30px;font-weight:700;transform:scaleX(0.9066);transform-origin:left center;">29.01.19 10:51</div>
<svg class="a" style="left:353.8px;top:282.7px;" width="25.4" height="25.4" viewBox="0 0 26 26"><clipPath id="fk2"><circle cx="13" cy="13" r="13"/></clipPath><g clip-path="url(#fk2)"><rect width="26" height="26" fill="#ededed"/><g transform="translate(13 15) scale(1.15) translate(-13 -14.500)"><path d="M0 27c0-5 3.500-7.400 8.500-8.200h9c5 .8 8.500 3.200 8.500 8.200z" fill="#fafafa"/><path d="M10.600 15h4.800v4.200c-1.400 1.600-3.400 1.600-4.800 0z" fill="#c9987c"/><ellipse cx="13" cy="11.200" rx="5.400" ry="6.900" fill="#c9987c"/><path d="M7.900 8.500C8.200 5 10.200 3.800 13 3.800s4.800 1.200 5.100 4.700c-1.500-2-3.200-2.700-5.100-2.700s-3.600.7-5.100 2.700z" fill="#8a6a55" opacity=".55"/><path d="M9.900 10.400h2M14.100 10.400h2" stroke="#4a3328" stroke-width=".9" opacity=".75"/><path d="M10.600 14.600c1.400 1.200 3.400 1.200 4.800 0-1 .35-3.800.35-4.800 0z" fill="#fff" stroke="#f4f0ee" stroke-width=".5"/></g></g></svg>
<div class="t" style="top:287.00px;font-size:10.5px;line-height:14px;color:#464646;left:389.30px;letter-spacing:-0.059px;">Schmied Valentin</div>
<div class="t" style="top:288.50px;font-size:11.5px;line-height:15px;color:#464646;left:494.10px;letter-spacing:0.049px;">Kollegin Walser ist in Pflegeurlaub; Vertretung übernimmt Fr. Berger</div>
<svg class="a" style="left:1026px;top:287.4px;" width="16" height="16" viewBox="0 0 16 16"><g opacity="1"><circle cx="8" cy="8" r="6.700" fill="none" stroke="#ea4a4a" stroke-width="1.300"/><path d="M5 8h6" stroke="#ea4a4a" stroke-width="1.600"/></g></svg>
<svg class="a" style="left:1045px;top:287.4px;" width="16" height="16" viewBox="0 0 16 16"><g opacity="1"><rect x="-8.600" y="-1.700" width="17.200" height="3.400" rx="1.700" transform="translate(8 8) rotate(-45)" fill="none" stroke="#f6c9b9" stroke-width="1.2"/></g></svg>
<div class="a" style="left:246px;top:312px;width:828px;height:1px;background:#e6e6e6;"></div>
<svg class="a" style="left:249px;top:322.09999999999997px;" width="14.2" height="14.2" viewBox="0 0 16 16"><path d="M4.200 1.600L5 .6h6l.8 1" fill="none" stroke="#555" stroke-width="1"/><rect x="3.200" y="1.600" width="9.600" height="13.400" fill="#7aa7d9" stroke="#4a4a4a" stroke-width="1.200"/><rect x=".8" y="4.600" width="2.400" height="10.400" fill="#9bbbe0" stroke="#4a4a4a" stroke-width="1.100"/><rect x="12.800" y="4.600" width="2.400" height="10.400" fill="#9bbbe0" stroke="#4a4a4a" stroke-width="1.100"/><path d="M3.800 4.200h8.400M3.800 6.600h8.400M3.800 9h8.400M3.800 11.400h8.400M8 1.600v10" stroke="#dfe9f6" stroke-width=".8"/><path d="M6.400 15v-2.800h3.200V15" fill="#eee" stroke="#4a4a4a" stroke-width="1"/></svg>
<div class="t" style="top:323.00px;font-size:10px;line-height:13px;color:#333333;left:274.30px;font-weight:700;transform:scaleX(0.9066);transform-origin:left center;">21.01.19 10:44</div>
<svg class="a" style="left:353.8px;top:316.7px;" width="25.4" height="25.4" viewBox="0 0 26 26"><clipPath id="fk3"><circle cx="13" cy="13" r="13"/></clipPath><g clip-path="url(#fk3)"><rect width="26" height="26" fill="#aca49f"/><g transform="translate(13 15) scale(1.15) translate(-13 -14.500)"><path d="M5.500 25V11.500a7.500 8.500 0 0 1 15 0V25z" fill="#4d3629"/><path d="M0 27c0-5 3.500-7.400 8.500-8.200h9c5 .8 8.500 3.200 8.500 8.200z" fill="#f3eeea"/><path d="M10.600 15h4.800v4.200c-1.400 1.600-3.400 1.600-4.800 0z" fill="#e0b39a"/><ellipse cx="13" cy="11.200" rx="5.400" ry="6.900" fill="#e0b39a"/><path d="M7.400 11C6.800 5.200 9.400 2.600 13.200 2.600s6.200 2.800 5.400 8.400c-.5-2.400-1.300-3.600-2.200-4.100-2 .9-4.800.8-6.400.2-1 .8-2 2-2.600 3.900z" fill="#4d3629"/><path d="M9.900 10.400h2M14.100 10.400h2" stroke="#4a3328" stroke-width=".9" opacity=".75"/><path d="M10.600 14.600c1.400 1.200 3.400 1.200 4.800 0-1 .35-3.800.35-4.800 0z" fill="#fff" stroke="#f4f0ee" stroke-width=".5"/><path d="M6.400 11c-.6 4-.4 8 .6 11.500l2-1.500c-1.200-3-1.400-6.500-1-10zM19.600 11c.6 4 .4 8-.6 11.500l-2-1.500c1.200-3 1.400-6.500 1-10z" fill="#4d3629"/></g></g></svg>
<div class="t" style="top:321.00px;font-size:10.5px;line-height:14px;color:#464646;left:389.30px;letter-spacing:-0.048px;">Bachmann Iris</div>
<div class="t" style="top:322.50px;font-size:11.5px;line-height:15px;color:#464646;left:494.10px;letter-spacing:-0.034px;">Am 13. Juli gibt es eine kleine Feier zu meinem 5-jährigen Firmenjubiläum!</div>
<svg class="a" style="left:1026px;top:321.4px;" width="16" height="16" viewBox="0 0 16 16"><g opacity="1"><circle cx="8" cy="8" r="6.700" fill="none" stroke="#ea4a4a" stroke-width="1.300"/><path d="M5 8h6" stroke="#ea4a4a" stroke-width="1.600"/></g></svg>
<svg class="a" style="left:1045px;top:321.4px;" width="16" height="16" viewBox="0 0 16 16"><g opacity="1"><rect x="-8.600" y="-1.700" width="17.200" height="3.400" rx="1.700" transform="translate(8 8) rotate(-45)" fill="none" stroke="#f6c9b9" stroke-width="1.2"/></g></svg>
<div class="a" style="left:246px;top:346px;width:828px;height:1px;background:#e6e6e6;"></div>
<svg class="a" style="left:249px;top:358.5px;" width="14.2" height="14.2" viewBox="0 0 16 16"><path d="M4.200 1.600L5 .6h6l.8 1" fill="none" stroke="#555" stroke-width="1"/><rect x="3.200" y="1.600" width="9.600" height="13.400" fill="#7aa7d9" stroke="#4a4a4a" stroke-width="1.200"/><rect x=".8" y="4.600" width="2.400" height="10.400" fill="#9bbbe0" stroke="#4a4a4a" stroke-width="1.100"/><rect x="12.800" y="4.600" width="2.400" height="10.400" fill="#9bbbe0" stroke="#4a4a4a" stroke-width="1.100"/><path d="M3.800 4.200h8.400M3.800 6.600h8.400M3.800 9h8.400M3.800 11.400h8.400M8 1.600v10" stroke="#dfe9f6" stroke-width=".8"/><path d="M6.400 15v-2.800h3.200V15" fill="#eee" stroke="#4a4a4a" stroke-width="1"/></svg>
<div class="t" style="top:360.00px;font-size:10px;line-height:13px;color:#333333;left:274.30px;font-weight:700;transform:scaleX(0.9066);transform-origin:left center;">14.01.19 10:38</div>
<svg class="a" style="left:353.8px;top:353.1px;" width="25.4" height="25.4" viewBox="0 0 26 26"><clipPath id="fk4"><circle cx="13" cy="13" r="13"/></clipPath><g clip-path="url(#fk4)"><rect width="26" height="26" fill="#807d7b"/><rect x="15" width="11" height="26" fill="#94918f"/><g transform="translate(13 15) scale(1.15) translate(-13 -14.500)"><path d="M0 27c0-5 3.500-7.400 8.500-8.200h9c5 .8 8.500 3.200 8.500 8.200z" fill="#1a1f24"/><path d="M9.200 18.600L13 27l3.800-8.400z" fill="#dde2ee"/><path d="M10.600 15h4.800v4.200c-1.400 1.600-3.400 1.600-4.800 0z" fill="#d7a282"/><ellipse cx="13" cy="11.200" rx="5.400" ry="6.900" fill="#d7a282"/><path d="M7.400 11C6.800 5.200 9.400 2.600 13.200 2.600s6.200 2.800 5.400 8.400c-.5-2.400-1.300-3.600-2.200-4.100-2 .9-4.800.8-6.400.2-1 .8-2 2-2.600 3.900z" fill="#35261f"/><path d="M9.900 10.400h2M14.100 10.400h2" stroke="#4a3328" stroke-width=".9" opacity=".75"/><path d="M10.600 14.600c1.400 1.200 3.400 1.200 4.800 0-1 .35-3.800.35-4.800 0z" fill="#fff" stroke="#f4f0ee" stroke-width=".5"/></g></g></svg>
<div class="t" style="top:358.00px;font-size:10.5px;line-height:14px;color:#464646;left:389.30px;letter-spacing:0.074px;">Meyer Hubert</div>
<div class="t" style="top:351.50px;font-size:11.5px;line-height:15px;color:#464646;left:494.10px;letter-spacing:0.015px;">Heute In-House-Meeting bei unserem Kunden Bachmayer - bin in dringenden Fällen telefonisch</div>
<div class="t" style="top:366.50px;font-size:11.5px;line-height:15px;color:#464646;left:494.10px;letter-spacing:-0.031px;">erreichbar.</div>
<svg class="a" style="left:1026px;top:357.8px;" width="16" height="16" viewBox="0 0 16 16"><g opacity="1"><circle cx="8" cy="8" r="6.700" fill="none" stroke="#ea4a4a" stroke-width="1.300"/><path d="M5 8h6" stroke="#ea4a4a" stroke-width="1.600"/></g></svg>
<svg class="a" style="left:1045px;top:357.8px;" width="16" height="16" viewBox="0 0 16 16"><g opacity="1"><rect x="-8.600" y="-1.700" width="17.200" height="3.400" rx="1.700" transform="translate(8 8) rotate(-45)" fill="none" stroke="#f08a24" stroke-width="1.5"/></g></svg>
<div class="a" style="left:246px;top:385px;width:828px;height:1px;background:#e6e6e6;"></div>
<svg class="a" style="left:249px;top:395.0px;" width="14.2" height="14.2" viewBox="0 0 16 16"><path d="M4.200 1.600L5 .6h6l.8 1" fill="none" stroke="#555" stroke-width="1"/><rect x="3.200" y="1.600" width="9.600" height="13.400" fill="#7aa7d9" stroke="#4a4a4a" stroke-width="1.200"/><rect x=".8" y="4.600" width="2.400" height="10.400" fill="#9bbbe0" stroke="#4a4a4a" stroke-width="1.100"/><rect x="12.800" y="4.600" width="2.400" height="10.400" fill="#9bbbe0" stroke="#4a4a4a" stroke-width="1.100"/><path d="M3.800 4.200h8.400M3.800 6.600h8.400M3.800 9h8.400M3.800 11.400h8.400M8 1.600v10" stroke="#dfe9f6" stroke-width=".8"/><path d="M6.400 15v-2.800h3.200V15" fill="#eee" stroke="#4a4a4a" stroke-width="1"/></svg>
<div class="t" style="top:396.00px;font-size:10px;line-height:13px;color:#333333;left:274.30px;font-weight:700;transform:scaleX(0.9141);transform-origin:left center;">11.01.19 10:54</div>
<svg class="a" style="left:353.8px;top:389.6px;" width="25.4" height="25.4" viewBox="0 0 26 26"><clipPath id="fk5"><circle cx="13" cy="13" r="13"/></clipPath><g clip-path="url(#fk5)"><rect width="26" height="26" fill="#eef0f4"/><g transform="translate(13 15) scale(1.15) translate(-13 -14.500)"><path d="M0 27c0-5 3.500-7.400 8.500-8.200h9c5 .8 8.500 3.200 8.500 8.200z" fill="#c9dae6"/><path d="M10.600 15h4.800v4.200c-1.400 1.600-3.400 1.600-4.800 0z" fill="#dcab8e"/><ellipse cx="13" cy="11.200" rx="5.400" ry="6.900" fill="#dcab8e"/><path d="M7.400 11C6.800 5.200 9.400 2.600 13.200 2.600s6.200 2.800 5.400 8.400c-.5-2.400-1.300-3.600-2.200-4.100-2 .9-4.800.8-6.400.2-1 .8-2 2-2.600 3.900z" fill="#3f3028"/><path d="M9.900 10.400h2M14.100 10.400h2" stroke="#4a3328" stroke-width=".9" opacity=".75"/><path d="M10.600 14.600c1.400 1.200 3.400 1.200 4.800 0-1 .35-3.800.35-4.800 0z" fill="#fff" stroke="#f4f0ee" stroke-width=".5"/></g></g></svg>
<div class="t" style="top:394.00px;font-size:10.5px;line-height:14px;color:#464646;left:389.30px;letter-spacing:-0.002px;">Hofer Christian</div>
<div class="t" style="top:394.50px;font-size:11.5px;line-height:15px;color:#464646;left:494.10px;letter-spacing:0.035px;">Willkommen in unserem neuen Zeiterfassungssystem</div>
<svg class="a" style="left:1026px;top:394.3px;" width="16" height="16" viewBox="0 0 16 16"><g opacity="1"><circle cx="8" cy="8" r="6.700" fill="none" stroke="#ea4a4a" stroke-width="1.300"/><path d="M5 8h6" stroke="#ea4a4a" stroke-width="1.600"/></g></svg>
<svg class="a" style="left:1045px;top:394.3px;" width="16" height="16" viewBox="0 0 16 16"><g opacity="1"><rect x="-8.600" y="-1.700" width="17.200" height="3.400" rx="1.700" transform="translate(8 8) rotate(-45)" fill="none" stroke="#f6c9b9" stroke-width="1.2"/></g></svg>
<div class="a" style="left:246px;top:419px;width:828px;height:1px;background:#e6e6e6;"></div>
<svg class="a" style="left:771.7px;top:394.2px;" width="16.8" height="16.8" viewBox="0 0 16 16"><circle cx="8" cy="8" r="7.900" fill="#fcc21b"/><circle cx="5.400" cy="6.400" r="1" fill="#3a2a10"/><circle cx="10.600" cy="6.400" r="1" fill="#3a2a10"/><path d="M4.200 9.600c1.800 2.600 5.800 2.600 7.600 0" fill="none" stroke="#3a2a10" stroke-width="1" stroke-linecap="round"/></svg>
<svg class="a" style="left:253.0px;top:522.3px;" width="16" height="17" viewBox="0 0 16 17"><path d="M8 .6L.9 8.500 8 16.400M15.600 .6L8.500 8.500l7.100 7.900" fill="none" stroke="#b9b9b9" stroke-width="1"/></svg>
<svg class="a" style="left:288.0px;top:522.3px;" width="10" height="17" viewBox="0 0 10 17"><path d="M8.900 .6L1.800 8.500l7.100 7.900" fill="none" stroke="#b9b9b9" stroke-width="1"/></svg>
<div class="a" style="left:313px;top:523.8px;width:1px;height:14px;background:#e6e6e6;"></div>
<div class="t" style="top:523.50px;font-size:11.5px;line-height:15px;color:#464646;left:329.40px;letter-spacing:-0.364px;">Seite</div>
<div class="a" style="left:372.0px;top:520.3px;width:40px;height:22px;background:#fff;border:1px solid #cfcfcf;"></div>
<div class="t" style="top:525.00px;font-size:11px;line-height:14px;color:#464646;left:379.00px;">1</div>
<div class="t" style="top:523.50px;font-size:11.5px;line-height:15px;color:#464646;left:421.40px;letter-spacing:-0.308px;">von 1</div>
<div class="a" style="left:465px;top:523.8px;width:1px;height:14px;background:#e6e6e6;"></div>
<svg class="a" style="left:481.5px;top:522.3px;" width="10" height="17" viewBox="0 0 10 17"><path d="M1.100 .6L8.200 8.500l-7.100 7.900" fill="none" stroke="#b9b9b9" stroke-width="1"/></svg>
<svg class="a" style="left:510.0px;top:522.3px;" width="16" height="17" viewBox="0 0 16 17"><path d="M.4 .6L7.500 8.500.4 16.400M8 .6l7.100 7.900L8 16.400" fill="none" stroke="#b9b9b9" stroke-width="1"/></svg>
<div class="a" style="left:538px;top:523.8px;width:1px;height:14px;background:#e6e6e6;"></div>
<svg class="a" style="left:551.0px;top:522.8px;" width="16" height="16" viewBox="0 0 16 16"><path d="M14.800 8A6.800 6.800 0 1 1 11.400 2.100" fill="none" stroke="#9a9a9a" stroke-width="1.1" stroke-linecap="round"/><path d="M14.600 1v4.200h-4.200" fill="none" stroke="#9a9a9a" stroke-width="1.1" stroke-linecap="round" stroke-linejoin="round"/></svg>
<div class="t" style="top:523.50px;font-size:11.5px;line-height:15px;color:#464646;left:725.30px;letter-spacing:-0.118px;">Ansicht 1 - 6 von 6</div>
<div class="a" style="left:834px;top:523.8px;width:1px;height:14px;background:#e6e6e6;"></div>
<div class="t" style="top:523.50px;font-size:11.5px;line-height:15px;color:#464646;left:850.00px;letter-spacing:-0.256px;">Zeige</div>
<div class="a" style="left:893.0px;top:520.3px;width:54px;height:22px;background:#fff;border:1px solid #cfcfcf;"></div>
<div class="t" style="top:525.00px;font-size:11px;line-height:14px;color:#464646;left:900.00px;">20</div>
<svg class="a" style="left:930.0px;top:527.5px;" width="10" height="7" viewBox="0 0 10 7"><path d="M1 1l4 4.200L9 1" fill="none" stroke="#888" stroke-width="1"/></svg>
<div class="t" style="top:523.50px;font-size:11.5px;line-height:15px;color:#464646;left:962.00px;letter-spacing:-0.045px;">Elemente pro Seite</div>
<svg class="a" style="left:708.5px;top:471px;" width="13" height="21" viewBox="0 0 13 21"><path d="M1 1v15.500l3.700-3.300 2.600 6 2.400-1-2.600-5.800h5z" fill="#fff" stroke="#1a1a1a" stroke-width="1" stroke-linejoin="round"/></svg>
<div class="a" style="left:1082px;top:143px;width:830px;height:407px;background:#fdfdfd;border:1px solid #d8d8d8;border-radius:3px;"></div>
<div class="t" style="top:147.50px;font-size:13.6px;line-height:18px;color:#4b87c9;left:1092.30px;letter-spacing:0.018px;">Benachrichtigungen</div>
<svg class="a" style="left:1885.5px;top:148px;" width="16" height="16" viewBox="0 0 16 16"><circle cx="8" cy="8" r="7.4" fill="none" stroke="#8a8a8a" stroke-width="1"/><path d="M5.7 6.2a2.4 2.4 0 1 1 3.6 2.1c-.8.5-1.2.9-1.2 1.8" fill="none" stroke="#8a8a8a" stroke-width="1.1" stroke-linecap="round"/><circle cx="8.05" cy="12" r=".75" fill="#8a8a8a"/></svg>
<div class="a" style="left:1086px;top:177px;width:250px;height:25px;background:#fff;border:1px solid #cfcfcf;"></div>
<div class="a" style="left:1093px;top:178px;width:222px;height:23px;overflow:hidden">
<div class="t" style="top:3.50px;font-size:13.6px;line-height:18px;color:#464646;left:0.30px;letter-spacing:0.072px;">Offene Zeitbuchungsanträge, Offen</div>
</div>
<svg class="a" style="left:1318.5px;top:186.2px;" width="10" height="7" viewBox="0 0 10 7"><path d="M1 1l4 4.200L9 1" fill="none" stroke="#8c8c8c" stroke-width="1"/></svg>
<div class="a" style="left:1796px;top:177px;width:107px;height:24px;background:#fdfdfd;border:1px solid #d4d4d4;border-radius:3px;"></div>
<svg class="a" style="left:1799.7px;top:180.5px;" width="16.6" height="16.6" viewBox="0 0 16 16"><path d="M1.300 7.400A6.800 6.800 0 0 1 13.600 4.600M14.700 8.600A6.800 6.800 0 0 1 2.400 11.400" fill="none" stroke="#1f9c8c" stroke-width="1.500" stroke-linecap="round"/><path d="M14.700 .8v4.600H10.100M1.300 15.200v-4.600h4.600" fill="none" stroke="#1f9c8c" stroke-width="1.500" stroke-linecap="round" stroke-linejoin="round"/></svg>
<div class="t" style="top:181.00px;font-size:12.5px;line-height:16px;color:#666666;left:1821.00px;letter-spacing:0.032px;">Aktualisieren</div>
<svg class="a" style="left:1086.2px;top:217.9px;" width="15.6" height="15.6" viewBox="0 0 16 16"><circle cx="8" cy="8" r="5" fill="#fdc12c"/><path d="M14.50 8.00L15.80 8.00M12.60 12.60L13.52 13.52M8.00 14.50L8.00 15.80M3.40 12.60L2.48 13.52M1.50 8.00L0.20 8.00M3.40 3.40L2.48 2.48M8.00 1.50L8.00 0.20M12.60 3.40L13.52 2.48" stroke="#fbb024" stroke-width="1.400" stroke-linecap="round"/></svg>
<svg class="a" style="left:1110.8px;top:217.9px;" width="16" height="16" viewBox="0 0 16 16"><circle cx="8" cy="8" r="7.200" fill="none" stroke="#26a08f" stroke-width="1.400"/><path d="M4.800 8h6.400M8 4.800v6.400" stroke="#26a08f" stroke-width="1.400"/></svg>
<div class="t" style="top:221.00px;font-size:10px;line-height:13px;color:#333333;left:1136.30px;font-weight:700;transform:scaleX(0.9216);transform-origin:left center;">11.11.19 13:07</div>
<svg class="a" style="left:1215.7px;top:214.60000000000002px;" width="25.4" height="25.4" viewBox="0 0 26 26"><clipPath id="fn0"><circle cx="13" cy="13" r="13"/></clipPath><g clip-path="url(#fn0)"><rect width="26" height="26" fill="#c9c3cd"/><g transform="translate(13 15) scale(1.15) translate(-13 -14.500)"><path d="M5.500 25V11.500a7.500 8.500 0 0 1 15 0V25z" fill="#3a2420"/><path d="M0 27c0-5 3.500-7.400 8.500-8.200h9c5 .8 8.500 3.200 8.500 8.200z" fill="#b8404e"/><path d="M10.600 15h4.800v4.200c-1.400 1.600-3.400 1.600-4.800 0z" fill="#dba890"/><ellipse cx="13" cy="11.200" rx="5.400" ry="6.900" fill="#dba890"/><path d="M7.400 11C6.800 5.200 9.400 2.600 13.200 2.600s6.200 2.800 5.400 8.400c-.5-2.400-1.300-3.600-2.200-4.100-2 .9-4.800.8-6.400.2-1 .8-2 2-2.600 3.900z" fill="#3a2420"/><path d="M9.900 10.400h2M14.100 10.400h2" stroke="#4a3328" stroke-width=".9" opacity=".75"/><path d="M10.600 14.600c1.400 1.200 3.400 1.200 4.800 0-1 .35-3.800.35-4.800 0z" fill="#fff" stroke="#f4f0ee" stroke-width=".5"/><path d="M6.400 11c-.6 4-.4 8 .6 11.500l2-1.500c-1.200-3-1.400-6.500-1-10zM19.600 11c.6 4 .4 8-.6 11.500l-2-1.500c1.200-3 1.400-6.500 1-10z" fill="#3a2420"/></g></g></svg>
<div class="t" style="top:219.00px;font-size:10.5px;line-height:14px;color:#464646;left:1251.50px;letter-spacing:-0.016px;">Berger Ingrid</div>
<div class="t" style="top:220.50px;font-size:11.5px;line-height:15px;color:#464646;left:1356.30px;letter-spacing:-0.121px;">Schulung</div>
<svg class="a" style="left:1863px;top:219.0px;" width="16" height="16" viewBox="0 0 16 16"><circle cx="6.800" cy="6.800" r="5.700" fill="none" stroke="#5b9bd8" stroke-width="1.200"/><path d="M11 11L14.200 14.200" stroke="#5b9bd8" stroke-width="1.300" stroke-linecap="round"/></svg>
<svg class="a" style="left:1882.4px;top:219.3px;" width="16" height="16" viewBox="0 0 16 16"><g opacity="1"><circle cx="8" cy="8" r="6.700" fill="none" stroke="#f3a29d" stroke-width="1.300"/><path d="M5 8h6" stroke="#f3a29d" stroke-width="1.600"/></g></svg>
<div class="a" style="left:1083px;top:244px;width:828px;height:1px;background:#e6e6e6;"></div>
<svg class="a" style="left:1086.2px;top:251.99999999999997px;" width="15.6" height="15.6" viewBox="0 0 16 16"><circle cx="8" cy="8" r="5" fill="#fdc12c"/><path d="M14.50 8.00L15.80 8.00M12.60 12.60L13.52 13.52M8.00 14.50L8.00 15.80M3.40 12.60L2.48 13.52M1.50 8.00L0.20 8.00M3.40 3.40L2.48 2.48M8.00 1.50L8.00 0.20M12.60 3.40L13.52 2.48" stroke="#fbb024" stroke-width="1.400" stroke-linecap="round"/></svg>
<svg class="a" style="left:1110.8px;top:251.99999999999997px;" width="16" height="16" viewBox="0 0 16 16"><circle cx="8" cy="8" r="7.200" fill="none" stroke="#26a08f" stroke-width="1.400"/><path d="M4.800 8h6.400M8 4.800v6.400" stroke="#26a08f" stroke-width="1.400"/></svg>
<div class="t" style="top:255.00px;font-size:10px;line-height:13px;color:#333333;left:1136.30px;font-weight:700;transform:scaleX(0.9216);transform-origin:left center;">11.11.19 13:03</div>
<svg class="a" style="left:1215.7px;top:248.7px;" width="25.4" height="25.4" viewBox="0 0 26 26"><clipPath id="fn1"><circle cx="13" cy="13" r="13"/></clipPath><g clip-path="url(#fn1)"><rect width="26" height="26" fill="#aca49f"/><g transform="translate(13 15) scale(1.15) translate(-13 -14.500)"><path d="M5.500 25V11.500a7.500 8.500 0 0 1 15 0V25z" fill="#4d3629"/><path d="M0 27c0-5 3.500-7.400 8.500-8.200h9c5 .8 8.500 3.200 8.500 8.200z" fill="#f3eeea"/><path d="M10.600 15h4.800v4.200c-1.400 1.600-3.400 1.600-4.800 0z" fill="#e0b39a"/><ellipse cx="13" cy="11.200" rx="5.400" ry="6.900" fill="#e0b39a"/><path d="M7.400 11C6.800 5.200 9.400 2.600 13.200 2.600s6.200 2.800 5.400 8.400c-.5-2.400-1.300-3.600-2.200-4.100-2 .9-4.800.8-6.400.2-1 .8-2 2-2.600 3.900z" fill="#4d3629"/><path d="M9.900 10.400h2M14.100 10.400h2" stroke="#4a3328" stroke-width=".9" opacity=".75"/><path d="M10.600 14.600c1.400 1.200 3.400 1.200 4.800 0-1 .35-3.800.35-4.800 0z" fill="#fff" stroke="#f4f0ee" stroke-width=".5"/><path d="M6.400 11c-.6 4-.4 8 .6 11.500l2-1.500c-1.200-3-1.400-6.500-1-10zM19.600 11c.6 4 .4 8-.6 11.500l-2-1.500c1.200-3 1.400-6.500 1-10z" fill="#4d3629"/></g></g></svg>
<div class="t" style="top:253.00px;font-size:10.5px;line-height:14px;color:#464646;left:1251.50px;letter-spacing:-0.048px;">Bachmann Iris</div>
<div class="t" style="top:254.50px;font-size:11.5px;line-height:15px;color:#464646;left:1356.30px;letter-spacing:0.136px;">Urlaubsantrag</div>
<svg class="a" style="left:1863px;top:253.09999999999997px;" width="16" height="16" viewBox="0 0 16 16"><circle cx="6.800" cy="6.800" r="5.700" fill="none" stroke="#5b9bd8" stroke-width="1.200"/><path d="M11 11L14.200 14.200" stroke="#5b9bd8" stroke-width="1.300" stroke-linecap="round"/></svg>
<svg class="a" style="left:1882.4px;top:253.39999999999998px;" width="16" height="16" viewBox="0 0 16 16"><g opacity="1"><circle cx="8" cy="8" r="6.700" fill="none" stroke="#f3a29d" stroke-width="1.300"/><path d="M5 8h6" stroke="#f3a29d" stroke-width="1.600"/></g></svg>
<div class="a" style="left:1083px;top:278px;width:828px;height:1px;background:#e6e6e6;"></div>
<svg class="a" style="left:1089.9px;top:522.3px;" width="16" height="17" viewBox="0 0 16 17"><path d="M8 .6L.9 8.500 8 16.400M15.600 .6L8.500 8.500l7.100 7.900" fill="none" stroke="#b9b9b9" stroke-width="1"/></svg>
<svg class="a" style="left:1124.9px;top:522.3px;" width="10" height="17" viewBox="0 0 10 17"><path d="M8.900 .6L1.800 8.500l7.100 7.900" fill="none" stroke="#b9b9b9" stroke-width="1"/></svg>
<div class="a" style="left:1150px;top:523.8px;width:1px;height:14px;background:#e6e6e6;"></div>
<div class="t" style="top:523.50px;font-size:11.5px;line-height:15px;color:#464646;left:1166.30px;letter-spacing:-0.364px;">Seite</div>
<div class="a" style="left:1208.9px;top:520.3px;width:40px;height:22px;background:#fff;border:1px solid #cfcfcf;"></div>
<div class="t" style="top:525.00px;font-size:11px;line-height:14px;color:#464646;left:1215.90px;">1</div>
<div class="t" style="top:523.50px;font-size:11.5px;line-height:15px;color:#464646;left:1258.30px;letter-spacing:-0.308px;">von 1</div>
<div class="a" style="left:1302px;top:523.8px;width:1px;height:14px;background:#e6e6e6;"></div>
<svg class="a" style="left:1318.4px;top:522.3px;" width="10" height="17" viewBox="0 0 10 17"><path d="M1.100 .6L8.200 8.500l-7.100 7.900" fill="none" stroke="#b9b9b9" stroke-width="1"/></svg>
<svg class="a" style="left:1346.9px;top:522.3px;" width="16" height="17" viewBox="0 0 16 17"><path d="M.4 .6L7.500 8.500.4 16.400M8 .6l7.100 7.900L8 16.400" fill="none" stroke="#b9b9b9" stroke-width="1"/></svg>
<div class="a" style="left:1375px;top:523.8px;width:1px;height:14px;background:#e6e6e6;"></div>
<svg class="a" style="left:1387.9px;top:522.8px;" width="16" height="16" viewBox="0 0 16 16"><path d="M14.800 8A6.800 6.800 0 1 1 11.400 2.100" fill="none" stroke="#9a9a9a" stroke-width="1.1" stroke-linecap="round"/><path d="M14.600 1v4.200h-4.200" fill="none" stroke="#9a9a9a" stroke-width="1.1" stroke-linecap="round" stroke-linejoin="round"/></svg>
<div class="t" style="top:523.50px;font-size:11.5px;line-height:15px;color:#464646;left:1562.30px;letter-spacing:-0.118px;">Ansicht 1 - 2 von 2</div>
<div class="a" style="left:1671px;top:523.8px;width:1px;height:14px;background:#e6e6e6;"></div>
<div class="t" style="top:523.50px;font-size:11.5px;line-height:15px;color:#464646;left:1687.00px;letter-spacing:-0.256px;">Zeige</div>
<div class="a" style="left:1730.0px;top:520.3px;width:54px;height:22px;background:#fff;border:1px solid #cfcfcf;"></div>
<div class="t" style="top:525.00px;font-size:11px;line-height:14px;color:#464646;left:1737.00px;">20</div>
<svg class="a" style="left:1767.0px;top:527.5px;" width="10" height="7" viewBox="0 0 10 7"><path d="M1 1l4 4.200L9 1" fill="none" stroke="#888" stroke-width="1"/></svg>
<div class="t" style="top:523.50px;font-size:11.5px;line-height:15px;color:#464646;left:1799.00px;letter-spacing:-0.045px;">Elemente pro Seite</div>
<div class="a" style="left:245px;top:557px;width:830px;height:407px;background:#fdfdfd;border:1px solid #d8d8d8;border-radius:3px;"></div>
<div class="t" style="top:561.50px;font-size:13.6px;line-height:18px;color:#4b87c9;left:255.30px;letter-spacing:0.131px;">Übersicht: Stunden pro Mitarbeiter</div>
<svg class="a" style="left:1048.5px;top:562px;" width="16" height="16" viewBox="0 0 16 16"><circle cx="8" cy="8" r="7.4" fill="none" stroke="#8a8a8a" stroke-width="1"/><path d="M5.7 6.2a2.4 2.4 0 1 1 3.6 2.1c-.8.5-1.2.9-1.2 1.8" fill="none" stroke="#8a8a8a" stroke-width="1.1" stroke-linecap="round"/><circle cx="8.05" cy="12" r=".75" fill="#8a8a8a"/></svg>
<div class="a" style="left:249px;top:588px;width:276px;height:30px;background:#ececec;border-radius:2px;"></div>
<div class="a" style="left:254px;top:591px;width:64.5px;height:24px;background:#fff;border:1px solid #cfcfcf;"></div>
<div class="t" style="top:595.50px;font-size:11.8px;line-height:15px;color:#464646;left:260.30px;letter-spacing:0.041px;">Monat</div>
<svg class="a" style="left:300px;top:599.5px;" width="10" height="7" viewBox="0 0 10 7"><path d="M1 1l4 4.200L9 1" fill="none" stroke="#777" stroke-width="1"/></svg>
<div class="a" style="left:324px;top:591px;width:173px;height:24px;background:#fff;border:1px solid #cfcfcf;border-radius:3px;"></div>
<div class="a" style="left:340px;top:592px;width:1px;height:22px;background:#cfcfcf;"></div>
<div class="a" style="left:409px;top:592px;width:1px;height:22px;background:#cfcfcf;"></div>
<div class="a" style="left:479px;top:592px;width:1px;height:22px;background:#cfcfcf;"></div>
<svg class="a" style="left:328.5px;top:597.0px;" width="8" height="12" viewBox="0 0 8 12"><path d="M6.500 .8L1.500 6l5 5.200" fill="none" stroke="#8a8a8a" stroke-width="1"/></svg>
<svg class="a" style="left:484.5px;top:597.0px;" width="8" height="12" viewBox="0 0 8 12"><path d="M1.500 .8L6.500 6l-5 5.200" fill="none" stroke="#8a8a8a" stroke-width="1"/></svg>
<div class="t" style="top:595.50px;font-size:11.5px;line-height:15px;color:#464646;left:346.00px;letter-spacing:-0.020px;">01.11.2019</div>
<div class="t" style="top:595.50px;font-size:11.5px;line-height:15px;color:#464646;left:416.00px;letter-spacing:-0.020px;">30.11.2019</div>
<svg class="a" style="left:501.4px;top:594.7px;" width="16" height="16" viewBox="0 0 16 16"><path d="M14.800 8A6.800 6.800 0 1 1 11.400 2.100" fill="none" stroke="#26a08f" stroke-width="1.4" stroke-linecap="round"/><path d="M14.600 1v4.200h-4.200" fill="none" stroke="#26a08f" stroke-width="1.4" stroke-linecap="round" stroke-linejoin="round"/></svg>
<div class="a" style="left:246px;top:624px;width:811px;height:1px;background:#e6e6e6;"></div>
<div class="a" style="left:246px;top:649px;width:828px;height:1px;background:#d0d0d0;"></div>
<div class="a" style="left:462px;top:625px;width:1px;height:23px;background:#d4d4d4;"></div>
<div class="a" style="left:570px;top:625px;width:1px;height:23px;background:#d4d4d4;"></div>
<div class="a" style="left:678px;top:625px;width:1px;height:23px;background:#d4d4d4;"></div>
<div class="a" style="left:786px;top:625px;width:1px;height:23px;background:#d4d4d4;"></div>
<div class="a" style="left:894px;top:625px;width:1px;height:23px;background:#d4d4d4;"></div>
<div class="a" style="left:1056px;top:625px;width:1px;height:23px;background:#d4d4d4;"></div>
<div class="t" style="top:629.50px;font-size:11.5px;line-height:15px;color:#464646;left:253.20px;letter-spacing:0.288px;">Mitarbeiter</div>
<div class="t" style="top:629.50px;font-size:11.5px;line-height:15px;color:#464646;right:1381.00px;transform:scaleX(0.8570);transform-origin:right center;">AZ</div>
<svg class="a" style="left:538.5px;top:630.5px;" width="8" height="12" viewBox="0 0 8 12"><path d="M4 .5v10M.8 7.500L4 11l3.200-3.500" fill="none" stroke="#666" stroke-width="1"/></svg>
<div class="t" style="top:629.50px;font-size:11.5px;line-height:15px;color:#464646;right:1255.00px;transform:scaleX(0.9934);transform-origin:right center;">BNA</div>
<div class="t" style="top:629.50px;font-size:11.5px;line-height:15px;color:#464646;right:1147.70px;transform:scaleX(0.9096);transform-origin:right center;">GIBA</div>
<div class="t" style="top:629.50px;font-size:11.5px;line-height:15px;color:#464646;right:1039.80px;transform:scaleX(0.7957);transform-origin:right center;">TS</div>
<div class="t" style="top:629.50px;font-size:11.5px;line-height:15px;color:#464646;right:877.50px;transform:scaleX(0.9087);transform-origin:right center;">AS (Std)</div>
<div class="t" style="top:655.50px;font-size:11.5px;line-height:15px;color:#464646;left:249.20px;letter-spacing:-0.041px;">Schmied Valentin</div>
<div class="t" style="top:656.00px;font-size:11px;line-height:14px;color:#1f8b24;right:1346.70px;">113.75</div>
<div class="t" style="top:656.00px;font-size:11px;line-height:14px;color:#1f8b24;right:1239.00px;">8.00 h</div>
<div class="t" style="top:656.00px;font-size:11px;line-height:14px;color:#1f8b24;right:1131.00px;">121.75 h</div>
<div class="t" style="top:656.00px;font-size:11px;line-height:14px;color:#1f8b24;right:1023.00px;">1.75 h</div>
<div class="a" style="left:1004px;top:653px;width:4px;height:20px;background:#2e8b2e;"></div>
<div class="t" style="top:657.00px;font-size:11px;line-height:14px;color:#464646;right:916.50px;">45.67</div>
<div class="a" style="left:246px;top:675px;width:811px;height:1px;background:#e6e6e6;"></div>
<div class="t" style="top:680.50px;font-size:11.5px;line-height:15px;color:#464646;left:249.20px;letter-spacing:-0.185px;">Kaiser Sebastian</div>
<div class="t" style="top:681.00px;font-size:11px;line-height:14px;color:#1f8b24;right:1346.70px;">113.75</div>
<div class="t" style="top:681.00px;font-size:11px;line-height:14px;color:#1f8b24;right:1239.00px;">8.00 h</div>
<div class="t" style="top:681.00px;font-size:11px;line-height:14px;color:#1f8b24;right:1131.00px;">121.75 h</div>
<div class="t" style="top:681.00px;font-size:11px;line-height:14px;color:#1f8b24;right:1023.00px;">1.75 h</div>
<div class="a" style="left:1002px;top:678px;width:2px;height:20px;background:#ee6262;"></div>
<div class="t" style="top:682.00px;font-size:11px;line-height:14px;color:#464646;left:1009.30px;">-14.15</div>
<div class="a" style="left:246px;top:700px;width:811px;height:1px;background:#e6e6e6;"></div>
<div class="t" style="top:705.50px;font-size:11.5px;line-height:15px;color:#464646;left:249.20px;letter-spacing:-0.300px;">Klein Elisa</div>
<div class="t" style="top:706.00px;font-size:11px;line-height:14px;color:#1f8b24;right:1346.70px;">113.75</div>
<div class="t" style="top:706.00px;font-size:11px;line-height:14px;color:#1f8b24;right:1239.00px;">8.00 h</div>
<div class="t" style="top:706.00px;font-size:11px;line-height:14px;color:#1f8b24;right:1131.00px;">121.75 h</div>
<div class="t" style="top:706.00px;font-size:11px;line-height:14px;color:#1f8b24;right:1023.00px;">1.75 h</div>
<div class="a" style="left:1004px;top:703px;width:2px;height:20px;background:#2e8b2e;"></div>
<div class="t" style="top:707.00px;font-size:11px;line-height:14px;color:#464646;right:916.50px;">24.85</div>
<div class="a" style="left:246px;top:725px;width:811px;height:1px;background:#e6e6e6;"></div>
<div class="t" style="top:730.50px;font-size:11.5px;line-height:15px;color:#464646;left:249.20px;letter-spacing:0.127px;">Meyer Hubert</div>
<div class="t" style="top:731.00px;font-size:11px;line-height:14px;color:#1f8b24;right:1346.70px;">66.91</div>
<div class="t" style="top:731.00px;font-size:11px;line-height:14px;color:#1f8b24;right:1239.00px;">24.00 h</div>
<div class="t" style="top:731.00px;font-size:11px;line-height:14px;color:#1f8b24;right:1131.00px;">90.91 h</div>
<div class="t" style="top:731.00px;font-size:11px;line-height:14px;color:#d0201c;right:1023.00px;">-29.09 h</div>
<div class="a" style="left:1004px;top:728px;width:1px;height:20px;background:#2e8b2e;"></div>
<div class="t" style="top:732.00px;font-size:11px;line-height:14px;color:#464646;right:916.50px;">11.99</div>
<div class="a" style="left:246px;top:750px;width:811px;height:1px;background:#e6e6e6;"></div>
<div class="t" style="top:755.50px;font-size:11.5px;line-height:15px;color:#464646;left:249.20px;letter-spacing:-0.059px;">Heinz Daniel</div>
<div class="t" style="top:756.00px;font-size:11px;line-height:14px;color:#1f8b24;right:1346.70px;">7.07</div>
<div class="t" style="top:756.00px;font-size:11px;line-height:14px;color:#1f8b24;right:1239.00px;">8.00 h</div>
<div class="t" style="top:756.00px;font-size:11px;line-height:14px;color:#1f8b24;right:1131.00px;">8.00 h</div>
<div class="t" style="top:756.00px;font-size:11px;line-height:14px;color:#d0201c;right:1023.00px;">-96.00 h</div>
<div class="a" style="left:953px;top:753px;width:51px;height:20px;background:#ee6262;"></div>
<div class="t" style="top:757.00px;font-size:11px;line-height:14px;color:#464646;left:1009.30px;">-469.22</div>
<div class="a" style="left:246px;top:775px;width:811px;height:1px;background:#e6e6e6;"></div>
<div class="t" style="top:780.50px;font-size:11.5px;line-height:15px;color:#464646;left:249.20px;letter-spacing:-0.188px;">Eis Markus</div>
<div class="t" style="top:781.00px;font-size:11px;line-height:14px;color:#1f8b24;right:1346.70px;">6.73</div>
<div class="t" style="top:781.00px;font-size:11px;line-height:14px;color:#1f8b24;right:1239.00px;">0.00 h</div>
<div class="t" style="top:781.00px;font-size:11px;line-height:14px;color:#1f8b24;right:1131.00px;">0.00 h</div>
<div class="t" style="top:781.00px;font-size:11px;line-height:14px;color:#d0201c;right:1023.00px;">-104.00 h</div>
<div class="a" style="left:964px;top:778px;width:40px;height:20px;background:#ee6262;"></div>
<div class="t" style="top:782.00px;font-size:11px;line-height:14px;color:#464646;left:1009.30px;">-370.02</div>
<div class="a" style="left:246px;top:800px;width:811px;height:1px;background:#e6e6e6;"></div>
<div class="t" style="top:805.50px;font-size:11.5px;line-height:15px;color:#464646;left:249.20px;letter-spacing:-0.123px;">Halpert Jim</div>
<div class="t" style="top:806.00px;font-size:11px;line-height:14px;color:#1f8b24;right:1346.70px;">5.17</div>
<div class="t" style="top:806.00px;font-size:11px;line-height:14px;color:#1f8b24;right:1239.00px;">8.00 h</div>
<div class="t" style="top:806.00px;font-size:11px;line-height:14px;color:#1f8b24;right:1131.00px;">8.00 h</div>
<div class="t" style="top:806.00px;font-size:11px;line-height:14px;color:#d0201c;right:1023.00px;">-96.00 h</div>
<div class="a" style="left:958px;top:803px;width:46px;height:20px;background:#ee6262;"></div>
<div class="t" style="top:807.00px;font-size:11px;line-height:14px;color:#464646;left:1009.30px;">-422.79</div>
<div class="a" style="left:246px;top:825px;width:811px;height:1px;background:#e6e6e6;"></div>
<div class="t" style="top:830.50px;font-size:11.5px;line-height:15px;color:#464646;left:249.20px;letter-spacing:-0.111px;">Steiner Sophie</div>
<div class="t" style="top:831.00px;font-size:11px;line-height:14px;color:#1f8b24;right:1346.70px;">0.28</div>
<div class="t" style="top:831.00px;font-size:11px;line-height:14px;color:#1f8b24;right:1239.00px;">32.00 h</div>
<div class="t" style="top:831.00px;font-size:11px;line-height:14px;color:#1f8b24;right:1131.00px;">32.28 h</div>
<div class="t" style="top:831.00px;font-size:11px;line-height:14px;color:#d0201c;right:1023.00px;">-71.72 h</div>
<div class="a" style="left:992px;top:828px;width:12px;height:20px;background:#ee6262;"></div>
<div class="t" style="top:832.00px;font-size:11px;line-height:14px;color:#464646;left:1009.30px;">-107.13</div>
<div class="a" style="left:246px;top:850px;width:811px;height:1px;background:#e6e6e6;"></div>
<div class="t" style="top:855.50px;font-size:11.5px;line-height:15px;color:#464646;left:249.20px;letter-spacing:0.031px;">Lehner Herwig</div>
<div class="t" style="top:856.00px;font-size:11px;line-height:14px;color:#1f8b24;right:1346.70px;">0.00</div>
<div class="t" style="top:856.00px;font-size:11px;line-height:14px;color:#1f8b24;right:1239.00px;">8.00 h</div>
<div class="t" style="top:856.00px;font-size:11px;line-height:14px;color:#1f8b24;right:1131.00px;">8.00 h</div>
<div class="t" style="top:856.00px;font-size:11px;line-height:14px;color:#d0201c;right:1023.00px;">-96.00 h</div>
<div class="a" style="left:921px;top:853px;width:83px;height:20px;background:#ee6262;"></div>
<div class="t" style="top:857.00px;font-size:11px;line-height:14px;color:#464646;left:1009.30px;">-761.96</div>
<div class="a" style="left:246px;top:875px;width:811px;height:1px;background:#e6e6e6;"></div>
<div class="t" style="top:880.50px;font-size:11.5px;line-height:15px;color:#464646;left:249.20px;letter-spacing:-0.130px;">Wieser Max</div>
<div class="t" style="top:881.00px;font-size:11px;line-height:14px;color:#1f8b24;right:1346.70px;">0.00</div>
<div class="t" style="top:881.00px;font-size:11px;line-height:14px;color:#1f8b24;right:1239.00px;">24.00 h</div>
<div class="t" style="top:881.00px;font-size:11px;line-height:14px;color:#1f8b24;right:1131.00px;">24.00 h</div>
<div class="t" style="top:881.00px;font-size:11px;line-height:14px;color:#d0201c;right:1023.00px;">-96.00 h</div>
<div class="a" style="left:1004px;top:878px;width:2px;height:20px;background:#2e8b2e;"></div>
<div class="t" style="top:882.00px;font-size:11px;line-height:14px;color:#464646;right:916.50px;">19.00</div>
<div class="a" style="left:246px;top:900px;width:811px;height:1px;background:#e6e6e6;"></div>
<div class="t" style="top:905.50px;font-size:11.5px;line-height:15px;color:#464646;left:249.20px;letter-spacing:0.024px;">Berger Ingrid</div>
<div class="t" style="top:906.00px;font-size:11px;line-height:14px;color:#1f8b24;right:1346.70px;">0.00</div>
<div class="t" style="top:906.00px;font-size:11px;line-height:14px;color:#1f8b24;right:1239.00px;">8.00 h</div>
<div class="t" style="top:906.00px;font-size:11px;line-height:14px;color:#1f8b24;right:1131.00px;">8.00 h</div>
<div class="t" style="top:906.00px;font-size:11px;line-height:14px;color:#d0201c;right:1023.00px;">-96.00 h</div>
<div class="a" style="left:948px;top:903px;width:56px;height:20px;background:#ee6262;"></div>
<div class="t" style="top:907.00px;font-size:11px;line-height:14px;color:#464646;left:1009.30px;">-516.54</div>
<div class="a" style="left:246px;top:925px;width:811px;height:1px;background:#e6e6e6;"></div>
<div class="a" style="left:1059px;top:667px;width:13px;height:123px;background:#c1c1c1;"></div>
<svg class="a" style="left:1061px;top:656px;" width="9" height="6" viewBox="0 0 9 6"><path d="M.5 5.500L4.500 1l4 4.500z" fill="#a3a3a3"/></svg>
<svg class="a" style="left:1061px;top:915.5px;" width="9" height="6" viewBox="0 0 9 6"><path d="M.5 .5L4.500 5l4-4.500z" fill="#505050"/></svg>
<div class="a" style="left:246px;top:928px;width:828px;height:1px;background:#d0d0d0;"></div>
<svg class="a" style="left:253.0px;top:936.3px;" width="16" height="17" viewBox="0 0 16 17"><path d="M8 .6L.9 8.500 8 16.400M15.600 .6L8.500 8.500l7.100 7.900" fill="none" stroke="#b9b9b9" stroke-width="1"/></svg>
<svg class="a" style="left:288.0px;top:936.3px;" width="10" height="17" viewBox="0 0 10 17"><path d="M8.900 .6L1.800 8.500l7.100 7.900" fill="none" stroke="#b9b9b9" stroke-width="1"/></svg>
<div class="a" style="left:313px;top:937.8px;width:1px;height:14px;background:#e6e6e6;"></div>
<div class="t" style="top:937.50px;font-size:11.5px;line-height:15px;color:#464646;left:329.40px;letter-spacing:-0.364px;">Seite</div>
<div class="a" style="left:372.0px;top:934.3px;width:40px;height:22px;background:#fff;border:1px solid #cfcfcf;"></div>
<div class="t" style="top:939.00px;font-size:11px;line-height:14px;color:#464646;left:379.00px;">1</div>
<div class="t" style="top:937.50px;font-size:11.5px;line-height:15px;color:#464646;left:421.40px;letter-spacing:-0.308px;">von 1</div>
<div class="a" style="left:465px;top:937.8px;width:1px;height:14px;background:#e6e6e6;"></div>
<svg class="a" style="left:481.5px;top:936.3px;" width="10" height="17" viewBox="0 0 10 17"><path d="M1.100 .6L8.200 8.500l-7.100 7.900" fill="none" stroke="#b9b9b9" stroke-width="1"/></svg>
<svg class="a" style="left:510.0px;top:936.3px;" width="16" height="17" viewBox="0 0 16 17"><path d="M.4 .6L7.500 8.500.4 16.400M8 .6l7.100 7.900L8 16.400" fill="none" stroke="#b9b9b9" stroke-width="1"/></svg>
<div class="a" style="left:538px;top:937.8px;width:1px;height:14px;background:#e6e6e6;"></div>
<svg class="a" style="left:551.0px;top:936.8px;" width="16" height="16" viewBox="0 0 16 16"><path d="M14.800 8A6.800 6.800 0 1 1 11.400 2.100" fill="none" stroke="#9a9a9a" stroke-width="1.1" stroke-linecap="round"/><path d="M14.600 1v4.200h-4.200" fill="none" stroke="#9a9a9a" stroke-width="1.1" stroke-linecap="round" stroke-linejoin="round"/></svg>
<div class="t" style="top:937.50px;font-size:11.5px;line-height:15px;color:#464646;left:713.00px;letter-spacing:-0.121px;">Ansicht 1 - 22 von 22</div>
<div class="a" style="left:834px;top:937.8px;width:1px;height:14px;background:#e6e6e6;"></div>
<div class="t" style="top:937.50px;font-size:11.5px;line-height:15px;color:#464646;left:850.00px;letter-spacing:-0.256px;">Zeige</div>
<div class="a" style="left:893.0px;top:934.3px;width:54px;height:22px;background:#fff;border:1px solid #cfcfcf;"></div>
<div class="t" style="top:939.00px;font-size:11px;line-height:14px;color:#464646;left:900.00px;">100</div>
<svg class="a" style="left:930.0px;top:941.5px;" width="10" height="7" viewBox="0 0 10 7"><path d="M1 1l4 4.200L9 1" fill="none" stroke="#888" stroke-width="1"/></svg>
<div class="t" style="top:937.50px;font-size:11.5px;line-height:15px;color:#464646;left:962.00px;letter-spacing:-0.045px;">Elemente pro Seite</div>
<div class="a" style="left:1082px;top:557px;width:830px;height:407px;background:#fdfdfd;border:1px solid #d8d8d8;border-radius:3px;"></div>
<div class="t" style="top:561.50px;font-size:13.6px;line-height:18px;color:#4b87c9;left:1092.30px;letter-spacing:0.129px;">Übersicht: Stunden pro Hauptprojekt</div>
<svg class="a" style="left:1885.5px;top:562px;" width="16" height="16" viewBox="0 0 16 16"><circle cx="8" cy="8" r="7.4" fill="none" stroke="#8a8a8a" stroke-width="1"/><path d="M5.7 6.2a2.4 2.4 0 1 1 3.6 2.1c-.8.5-1.2.9-1.2 1.8" fill="none" stroke="#8a8a8a" stroke-width="1.1" stroke-linecap="round"/><circle cx="8.05" cy="12" r=".75" fill="#8a8a8a"/></svg>
<div class="a" style="left:1085px;top:586px;width:276px;height:30px;background:#ececec;border-radius:2px;"></div>
<div class="a" style="left:1090px;top:589px;width:64.5px;height:24px;background:#fff;border:1px solid #cfcfcf;"></div>
<div class="t" style="top:594.50px;font-size:11.8px;line-height:15px;color:#464646;left:1096.30px;letter-spacing:0.041px;">Monat</div>
<svg class="a" style="left:1136px;top:597.5px;" width="10" height="7" viewBox="0 0 10 7"><path d="M1 1l4 4.200L9 1" fill="none" stroke="#777" stroke-width="1"/></svg>
<div class="a" style="left:1161px;top:589px;width:173px;height:24px;background:#fff;border:1px solid #cfcfcf;border-radius:3px;"></div>
<div class="a" style="left:1177px;top:590px;width:1px;height:22px;background:#cfcfcf;"></div>
<div class="a" style="left:1246px;top:590px;width:1px;height:22px;background:#cfcfcf;"></div>
<div class="a" style="left:1316px;top:590px;width:1px;height:22px;background:#cfcfcf;"></div>
<svg class="a" style="left:1165.5px;top:595.0px;" width="8" height="12" viewBox="0 0 8 12"><path d="M6.500 .8L1.500 6l5 5.200" fill="none" stroke="#8a8a8a" stroke-width="1"/></svg>
<svg class="a" style="left:1321.5px;top:595.0px;" width="8" height="12" viewBox="0 0 8 12"><path d="M1.500 .8L6.500 6l-5 5.200" fill="none" stroke="#8a8a8a" stroke-width="1"/></svg>
<div class="t" style="top:594.50px;font-size:11.5px;line-height:15px;color:#464646;left:1183.00px;letter-spacing:-0.020px;">01.11.2019</div>
<div class="t" style="top:594.50px;font-size:11.5px;line-height:15px;color:#464646;left:1253.00px;letter-spacing:-0.020px;">30.11.2019</div>
<svg class="a" style="left:1337.4px;top:592.7px;" width="16" height="16" viewBox="0 0 16 16"><path d="M14.800 8A6.800 6.800 0 1 1 11.400 2.100" fill="none" stroke="#26a08f" stroke-width="1.4" stroke-linecap="round"/><path d="M14.600 1v4.200h-4.200" fill="none" stroke="#26a08f" stroke-width="1.4" stroke-linecap="round" stroke-linejoin="round"/></svg>
<div class="a" style="left:1363px;top:590px;width:170px;height:25px;background:#fff;border:1px solid #cfcfcf;"></div>
<div class="a" style="left:1370px;top:591px;width:134.5px;height:23px;overflow:hidden">
<div class="t" style="top:3.50px;font-size:13.6px;line-height:18px;color:#464646;left:0.30px;">Gruppiert nach 1. Ebene</div>
</div>
<svg class="a" style="left:1515.5px;top:599.2px;" width="10" height="7" viewBox="0 0 10 7"><path d="M1 1l4 4.200L9 1" fill="none" stroke="#8c8c8c" stroke-width="1"/></svg>
<div class="a" style="left:1083px;top:618px;width:828px;height:1px;background:#e6e6e6;"></div>
<div class="a" style="left:1083px;top:643px;width:828px;height:1px;background:#d0d0d0;"></div>
<div class="a" style="left:1319px;top:619px;width:1px;height:23.5px;background:#d4d4d4;"></div>
<div class="a" style="left:1437px;top:619px;width:1px;height:23.5px;background:#d4d4d4;"></div>
<div class="a" style="left:1556px;top:619px;width:1px;height:23.5px;background:#d4d4d4;"></div>
<div class="a" style="left:1674px;top:619px;width:1px;height:23.5px;background:#d4d4d4;"></div>
<div class="a" style="left:1792px;top:619px;width:1px;height:23.5px;background:#d4d4d4;"></div>
<div class="a" style="left:1910px;top:619px;width:1px;height:23.5px;background:#d4d4d4;"></div>
<div class="t" style="top:623.50px;font-size:11.5px;line-height:15px;color:#464646;left:1090.50px;letter-spacing:0.100px;">Projekt</div>
<div class="t" style="top:623.50px;font-size:11.5px;line-height:15px;color:#464646;left:1326.80px;letter-spacing:-0.014px;">Verrechenbare ...</div>
<div class="t" style="top:623.50px;font-size:11.5px;line-height:15px;color:#464646;left:1445.20px;letter-spacing:-0.023px;">Nicht Verrechen...</div>
<div class="t" style="top:623.50px;font-size:11.5px;line-height:15px;color:#464646;left:1564.30px;letter-spacing:-0.066px;">Gesamtarbeitsz...</div>
<div class="t" style="top:623.50px;font-size:11.5px;line-height:15px;color:#464646;right:141.50px;letter-spacing:-0.012px;">Verrechenbar %</div>
<div class="t" style="top:623.50px;font-size:11.5px;line-height:15px;color:#464646;right:23.50px;letter-spacing:0.027px;">Zieldauer</div>
<div class="t" style="top:649.50px;font-size:11.5px;line-height:15px;color:#464646;left:1086.30px;letter-spacing:0.031px;">2 Kunde Müller</div>
<div class="t" style="top:650.00px;font-size:11px;line-height:14px;color:#1f8b24;right:480.00px;">4.50 h</div>
<div class="t" style="top:650.00px;font-size:11px;line-height:14px;color:#1f8b24;right:361.40px;">0.00 h</div>
<div class="t" style="top:650.00px;font-size:11px;line-height:14px;color:#1f8b24;right:243.00px;">4.50 h</div>
<div class="t" style="top:650.00px;font-size:11px;line-height:14px;color:#1f8b24;right:125.00px;">100.0%</div>
<div class="t" style="top:650.00px;font-size:11px;line-height:14px;color:#1f8b24;right:7.00px;">1.00 h</div>
<div class="a" style="left:1083px;top:668px;width:828px;height:1px;background:#e6e6e6;"></div>
<div class="t" style="top:673.50px;font-size:11.5px;line-height:15px;color:#464646;left:1086.30px;letter-spacing:-0.139px;">5 Marketing &amp; PR</div>
<div class="t" style="top:674.00px;font-size:11px;line-height:14px;color:#1f8b24;right:480.00px;">0.00 h</div>
<div class="t" style="top:674.00px;font-size:11px;line-height:14px;color:#1f8b24;right:361.40px;">66.91 h</div>
<div class="t" style="top:674.00px;font-size:11px;line-height:14px;color:#1f8b24;right:243.00px;">66.91 h</div>
<div class="t" style="top:674.00px;font-size:11px;line-height:14px;color:#1f8b24;right:125.00px;">0.0%</div>
<div class="t" style="top:674.00px;font-size:11px;line-height:14px;color:#1f8b24;right:7.00px;">0.00 h</div>
<div class="a" style="left:1083px;top:692px;width:828px;height:1px;background:#e6e6e6;"></div>
<div class="t" style="top:697.50px;font-size:11.5px;line-height:15px;color:#464646;left:1086.30px;letter-spacing:0.027px;">11 Allgemeine Aufgaben</div>
<div class="t" style="top:698.00px;font-size:11px;line-height:14px;color:#1f8b24;right:480.00px;">0.00 h</div>
<div class="t" style="top:698.00px;font-size:11px;line-height:14px;color:#1f8b24;right:361.40px;">317.53 h</div>
<div class="t" style="top:698.00px;font-size:11px;line-height:14px;color:#1f8b24;right:243.00px;">317.53 h</div>
<div class="t" style="top:698.00px;font-size:11px;line-height:14px;color:#1f8b24;right:125.00px;">0.0%</div>
<div class="t" style="top:698.00px;font-size:11px;line-height:14px;color:#1f8b24;right:7.00px;">0.00 h</div>
<div class="a" style="left:1083px;top:716px;width:828px;height:1px;background:#e6e6e6;"></div>
<div class="t" style="top:721.50px;font-size:11.5px;line-height:15px;color:#464646;left:1086.30px;letter-spacing:0.057px;">12 Nichtleistungstätigkeiten</div>
<div class="t" style="top:722.00px;font-size:11px;line-height:14px;color:#1f8b24;right:480.00px;">0.00 h</div>
<div class="t" style="top:722.00px;font-size:11px;line-height:14px;color:#1f8b24;right:361.40px;">250.00 h</div>
<div class="t" style="top:722.00px;font-size:11px;line-height:14px;color:#1f8b24;right:243.00px;">250.00 h</div>
<div class="t" style="top:722.00px;font-size:11px;line-height:14px;color:#1f8b24;right:125.00px;">0.0%</div>
<div class="t" style="top:722.00px;font-size:11px;line-height:14px;color:#1f8b24;right:7.00px;">0.00 h</div>
<div class="a" style="left:1083px;top:740px;width:828px;height:1px;background:#e6e6e6;"></div>
<div class="a" style="left:1083px;top:741px;width:828px;height:24px;background:#eceffb;"></div>
<div class="a" style="left:1083px;top:764.5px;width:828px;height:1px;background:#e6e6e6;"></div>
<div class="t" style="top:745.00px;font-size:11px;line-height:14px;color:#17801c;right:480.00px;font-weight:700;font-style:italic;">4.50 h</div>
<div class="t" style="top:745.00px;font-size:11px;line-height:14px;color:#17801c;right:361.40px;font-weight:700;font-style:italic;">634.44 h</div>
<div class="t" style="top:745.00px;font-size:11px;line-height:14px;color:#17801c;right:243.00px;font-weight:700;font-style:italic;">638.94 h</div>
<div class="t" style="top:745.00px;font-size:11px;line-height:14px;color:#17801c;right:125.00px;font-weight:700;font-style:italic;">0.7%</div>
<div class="t" style="top:745.00px;font-size:11px;line-height:14px;color:#17801c;right:7.00px;font-weight:700;font-style:italic;">1.00 h</div>
<div class="a" style="left:1083px;top:928px;width:828px;height:1px;background:#d0d0d0;"></div>
<svg class="a" style="left:1089.9px;top:936.3px;" width="16" height="17" viewBox="0 0 16 17"><path d="M8 .6L.9 8.500 8 16.400M15.600 .6L8.500 8.500l7.100 7.900" fill="none" stroke="#b9b9b9" stroke-width="1"/></svg>
<svg class="a" style="left:1124.9px;top:936.3px;" width="10" height="17" viewBox="0 0 10 17"><path d="M8.900 .6L1.800 8.500l7.100 7.900" fill="none" stroke="#b9b9b9" stroke-width="1"/></svg>
<div class="a" style="left:1150px;top:937.8px;width:1px;height:14px;background:#e6e6e6;"></div>
<div class="t" style="top:937.50px;font-size:11.5px;line-height:15px;color:#464646;left:1166.30px;letter-spacing:-0.364px;">Seite</div>
<div class="a" style="left:1208.9px;top:934.3px;width:40px;height:22px;background:#fff;border:1px solid #cfcfcf;"></div>
<div class="t" style="top:939.00px;font-size:11px;line-height:14px;color:#464646;left:1215.90px;">1</div>
<div class="t" style="top:937.50px;font-size:11.5px;line-height:15px;color:#464646;left:1258.30px;letter-spacing:-0.308px;">von 1</div>
<div class="a" style="left:1302px;top:937.8px;width:1px;height:14px;background:#e6e6e6;"></div>
<svg class="a" style="left:1318.4px;top:936.3px;" width="10" height="17" viewBox="0 0 10 17"><path d="M1.100 .6L8.200 8.500l-7.100 7.900" fill="none" stroke="#b9b9b9" stroke-width="1"/></svg>
<svg class="a" style="left:1346.9px;top:936.3px;" width="16" height="17" viewBox="0 0 16 17"><path d="M.4 .6L7.500 8.500.4 16.400M8 .6l7.100 7.900L8 16.400" fill="none" stroke="#b9b9b9" stroke-width="1"/></svg>
<div class="a" style="left:1375px;top:937.8px;width:1px;height:14px;background:#e6e6e6;"></div>
<svg class="a" style="left:1387.9px;top:936.8px;" width="16" height="16" viewBox="0 0 16 16"><path d="M14.800 8A6.800 6.800 0 1 1 11.400 2.100" fill="none" stroke="#9a9a9a" stroke-width="1.1" stroke-linecap="round"/><path d="M14.600 1v4.200h-4.200" fill="none" stroke="#9a9a9a" stroke-width="1.1" stroke-linecap="round" stroke-linejoin="round"/></svg>
<div class="t" style="top:937.50px;font-size:11.5px;line-height:15px;color:#464646;left:1562.30px;letter-spacing:-0.118px;">Ansicht 1 - 4 von 4</div>
<div class="a" style="left:1671px;top:937.8px;width:1px;height:14px;background:#e6e6e6;"></div>
<div class="t" style="top:937.50px;font-size:11.5px;line-height:15px;color:#464646;left:1687.00px;letter-spacing:-0.256px;">Zeige</div>
<div class="a" style="left:1730.0px;top:934.3px;width:54px;height:22px;background:#fff;border:1px solid #cfcfcf;"></div>
<div class="t" style="top:939.00px;font-size:11px;line-height:14px;color:#464646;left:1737.00px;">25</div>
<svg class="a" style="left:1767.0px;top:941.5px;" width="10" height="7" viewBox="0 0 10 7"><path d="M1 1l4 4.200L9 1" fill="none" stroke="#888" stroke-width="1"/></svg>
<div class="t" style="top:937.50px;font-size:11.5px;line-height:15px;color:#464646;left:1799.00px;letter-spacing:-0.045px;">Elemente pro Seite</div>
</body></html>
